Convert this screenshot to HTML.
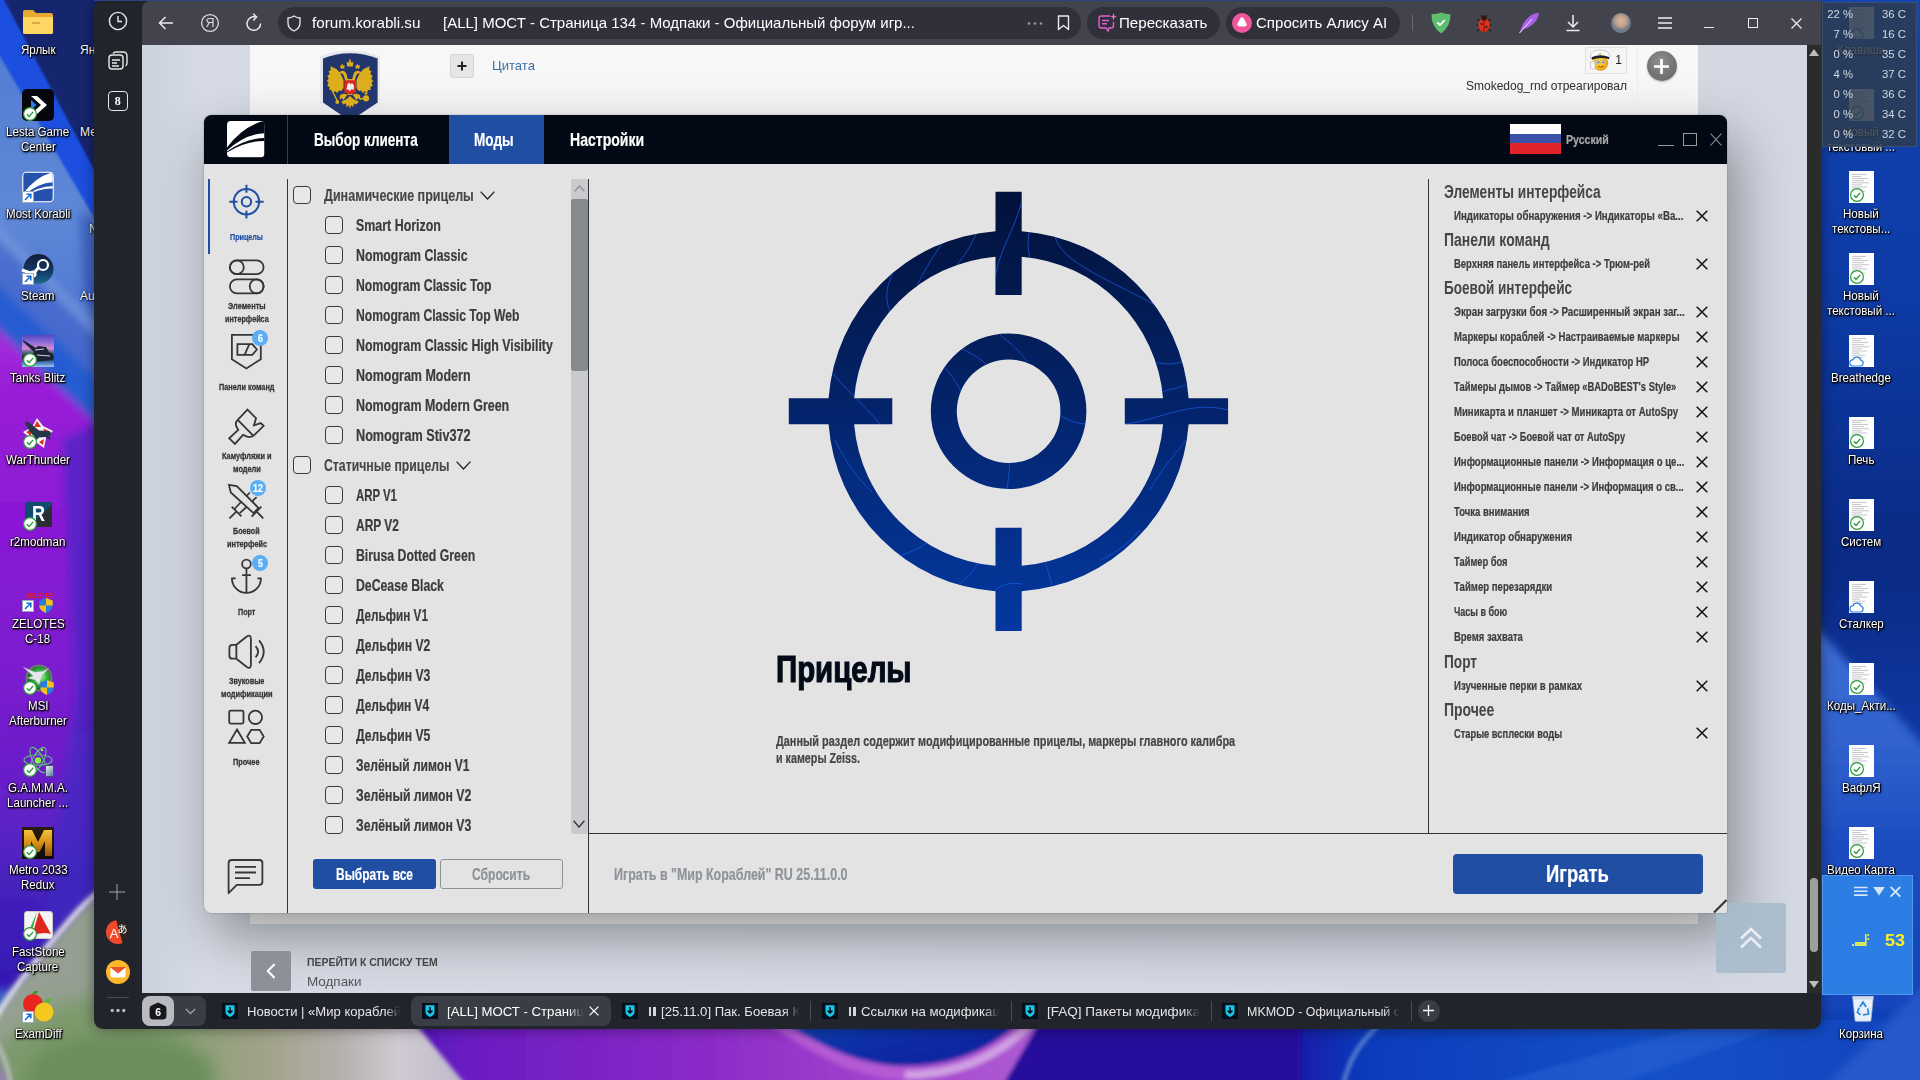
<!DOCTYPE html>
<html lang="ru"><head><meta charset="utf-8"><title>MOST</title>
<style>
html,body{margin:0;padding:0;width:1920px;height:1080px;overflow:hidden;background:#1a3db8;font-family:"Liberation Sans",sans-serif}
.t{position:absolute;white-space:nowrap;line-height:24px;display:block}
.b{position:absolute;box-sizing:border-box}
svg{position:absolute;overflow:visible}
.dl{position:absolute;width:120px;text-align:center;color:#fff;font-size:12.5px;line-height:15px;text-shadow:0 0 2px #000,1px 1px 2px #000,0 1px 3px rgba(0,0,0,.9);white-space:nowrap}
.ab{position:absolute}
</style>
</head><body>
<!-- desktop -->
<svg width="1920" height="1080" viewBox="0 0 1920 1080" style="left:0;top:0">
<defs>
<filter id="bl" x="-20%" y="-20%" width="140%" height="140%"><feGaussianBlur stdDeviation="9"/></filter>
<filter id="bl2" x="-20%" y="-20%" width="140%" height="140%"><feGaussianBlur stdDeviation="4"/></filter>
<filter id="bl4" x="-20%" y="-20%" width="140%" height="140%"><feGaussianBlur stdDeviation="1.2"/></filter>
<filter id="bl3" x="-20%" y="-20%" width="140%" height="140%"><feGaussianBlur stdDeviation="2"/></filter>
<linearGradient id="wtop" x1="0" y1="0" x2="0" y2="1"><stop offset="0" stop-color="#4f7ad2"/><stop offset=".2" stop-color="#5f88d6"/><stop offset=".32" stop-color="#4c72d0"/><stop offset="1" stop-color="#3a60cc"/></linearGradient>
<linearGradient id="wpur" x1="0" y1="0" x2="0" y2="1"><stop offset="0" stop-color="#a634dc"/><stop offset=".1" stop-color="#9a20d8"/><stop offset=".3" stop-color="#8c19d6"/><stop offset=".55" stop-color="#7a1ccf"/><stop offset=".72" stop-color="#6420c8"/><stop offset=".86" stop-color="#4420bc"/><stop offset="1" stop-color="#3418b4"/></linearGradient>
<linearGradient id="wr" x1="0" y1="0" x2="0" y2="1"><stop offset="0" stop-color="#1244b4"/><stop offset=".3" stop-color="#0d3aa4"/><stop offset=".55" stop-color="#0a2a84"/><stop offset=".75" stop-color="#113aa8"/><stop offset="1" stop-color="#1040b6"/></linearGradient>
<linearGradient id="wbot" gradientUnits="userSpaceOnUse" x1="0" y1="0" x2="1920" y2="0"><stop offset="0.0000" stop-color="#b8a8cc"/><stop offset="0.0130" stop-color="#74925f"/><stop offset="0.0781" stop-color="#82a070"/><stop offset="0.1354" stop-color="#9fa287"/><stop offset="0.1771" stop-color="#b4b0ac"/><stop offset="0.2083" stop-color="#cfcbd2"/><stop offset="0.5417" stop-color="#2a109c"/><stop offset="0.6667" stop-color="#1a14a4"/><stop offset="0.7135" stop-color="#0c3cbc"/><stop offset="0.8594" stop-color="#1450c8"/><stop offset="1.0000" stop-color="#1244be"/></linearGradient>
<linearGradient id="wbp" gradientUnits="userSpaceOnUse" x1="400" y1="0" x2="1060" y2="0"><stop offset="0" stop-color="#4a16b6"/><stop offset=".1" stop-color="#6a1cc2"/><stop offset=".45" stop-color="#8a2ac8"/><stop offset=".7" stop-color="#a040cc"/><stop offset="1" stop-color="#b060d4"/></linearGradient>
<linearGradient id="wbowl" x1="0" y1="0" x2="1" y2="1"><stop offset="0" stop-color="#1a58c0"/><stop offset=".5" stop-color="#0c30a8"/><stop offset="1" stop-color="#0a1c9a"/></linearGradient>
<linearGradient id="wrb" gradientUnits="userSpaceOnUse" x1="0" y1="620" x2="0" y2="1000"><stop offset="0" stop-color="#3f70d6"/><stop offset=".35" stop-color="#2f60cc"/><stop offset=".6" stop-color="#1c4cc0"/><stop offset="1" stop-color="#1644bc"/></linearGradient>
</defs>
<rect x="0" y="0" width="300" height="1080" fill="url(#wtop)"/>
<g filter="url(#bl4)"><polygon points="-20,-60 120,200 120,262 -20,22" fill="#1d4fe0"/><polygon points="-20,-45 120,219 120,-45" fill="#15286e"/></g><g filter="url(#bl2)"><polygon points="-10,218 110,338 110,350 -10,228" fill="#86a8e6" opacity=".55"/><polygon points="-10,232 110,352 110,470 -10,330" fill="#3f63cc" opacity=".6"/><polygon points="78,210 110,230 110,330 84,300" fill="#2a4cb8" opacity=".5"/><polygon points="-20,268 120,402 120,446 -20,312" fill="#1f5cd2" opacity=".85"/><polygon points="-20,312 120,446 120,990 -20,990" fill="url(#wpur)"/><polygon points="62,440 120,410 120,960 40,960 75,700" fill="#3a2abf" opacity=".6"/></g>
<rect x="0" y="1010" width="1920" height="70" fill="url(#wbot)"/>
<g filter="url(#bl2)"><path d="M-30,1050 C0,1005 30,966 70,920 C85,903 100,891 110,885 L110,1110 L-30,1110 Z" fill="#95a092"/></g><g filter="url(#bl)"><path d="M-30,1075 C30,1010 70,990 110,1000 L110,1110 L-30,1110 Z" fill="#7d9a6c"/><ellipse cx="120" cy="1075" rx="95" ry="42" fill="#6c8e5c"/></g><g filter="url(#bl2)"><path d="M-30,1040 C-5,1050 5,1070 10,1100 L-30,1100Z" fill="#9a78c0"/></g>
<g filter="url(#bl3)"><path d="M-12,1030 C5,1000 30,966 70,920 C82,906 92,897 100,891" stroke="#eeeaf4" stroke-width="4.500" fill="none" opacity=".95"/><path d="M-10,1035 C2,1048 8,1065 12,1090" stroke="#e0d8ec" stroke-width="3.500" fill="none" opacity=".7"/></g>
<g filter="url(#bl3)"><polygon points="396,1000 1060,1000 1060,1090 470,1090" fill="url(#wbp)"/><polygon points="1052,1000 1300,1000 1300,1090 1000,1090" fill="#26109c"/><path d="M745,1000 C808,1044 853,1073 905,1073 C967,1073 1014,1046 1046,1000" stroke="#b45ad4" stroke-width="13" fill="none"/><path d="M905,1075 C967,1075 1016,1048 1048,1002" stroke="#d4a8e6" stroke-width="8" fill="none" opacity=".9"/><path d="M750,1000 C810,1042 855,1066 905,1066 C965,1066 1010,1040 1038,1000 Z" fill="url(#wbowl)"/><path d="M1385,1020 C1360,1040 1348,1060 1342,1090" stroke="#a8d8f0" stroke-width="2.500" fill="none" opacity=".8"/><polygon points="1470,1090 1720,1020 1800,1020 1600,1090" fill="#2a62d4" opacity=".55"/></g>
<rect x="1800" y="0" width="120" height="1020" fill="url(#wr)"/>
<g filter="url(#bl2)"><polygon points="1800,610 1930,752 1930,1010 1800,1010" fill="url(#wrb)"/><polygon points="1820,1090 1930,980 1930,1090" fill="#2a5ccc" opacity=".8"/></g>
</svg>
<svg style="left:23px;top:10px" width="30" height="24" viewBox="0 0 30 24"><path d="M0 2 Q0 0 2 0 H10 L13 3 H28 Q30 3 30 5 V22 Q30 24 28 24 H2 Q0 24 0 22 Z" fill="#e8a92c"/><path d="M0 7 H30 V22 Q30 24 28 24 H2 Q0 24 0 22 Z" fill="#ffd564"/><rect x="9" y="12" width="8" height="2" fill="#d9a84a"/></svg>
<span class="t" style="left:20.72px;top:38.22px;font-size:12px;color:#fff;font-weight:normal;transform:scaleX(0.9631);transform-origin:0 50%;text-shadow:0 0 2px #000,1px 1px 2px #000,1px 1px 1px rgba(0,0,0,.9),0 1px 3px rgba(0,0,0,.85);">Ярлык</span>
<div class="b" style="left:22px;top:89px;width:32px;height:32px;background:#05070c;border-radius:5px"></div>
<svg style="left:22px;top:89px" width="32" height="32" viewBox="0 0 32 32"><path d="M9 7 H15 L25 16 L15 25 H9 L19 16 Z" fill="#fff"/><path d="M9 11 L14.5 16 L9 21 Z" fill="#2a7de8"/></svg>
<svg style="left:22.5px;top:106.5px" width="14" height="14" viewBox="0 0 14 14"><circle cx="7" cy="7" r="6.400" fill="#fff" stroke="#2c9a3c" stroke-width="1.200"/><path d="M3.900 7.200 L6.100 9.400 L10.200 4.900" fill="none" stroke="#2c9a3c" stroke-width="1.400"/></svg>
<span class="t" style="left:6.46px;top:120.22px;font-size:12px;color:#fff;font-weight:normal;transform:scaleX(0.9654);transform-origin:0 50%;text-shadow:0 0 2px #000,1px 1px 2px #000,1px 1px 1px rgba(0,0,0,.9),0 1px 3px rgba(0,0,0,.85);">Lesta Game</span>
<span class="t" style="left:20.62px;top:135.22px;font-size:12px;color:#fff;font-weight:normal;transform:scaleX(0.9655);transform-origin:0 50%;text-shadow:0 0 2px #000,1px 1px 2px #000,1px 1px 1px rgba(0,0,0,.9),0 1px 3px rgba(0,0,0,.85);">Center</span>
<svg style="left:22px;top:171px" width="32" height="32" viewBox="-1.500 -1.500 40.500 39.400"><defs><clipPath id="mkc"><rect width="37.500" height="36.400" rx="4.500"/></clipPath></defs><rect x="-1.200" y="-1.200" width="39.900" height="38.800" rx="5.500" fill="#fff"/><g clip-path="url(#mkc)"><rect width="37.500" height="36.400" fill="#2452ac"/><path d="M0 26.500 Q15.400 6 36 0 L37.500 0 L37.500 12.200 Q18.750 13 0 29.500 Z" fill="#fff"/><path d="M0 30.500 Q18.750 17.400 37.500 17 L37.500 20 Q18.750 19.600 0 31.500 Z" fill="#fff"/></g></svg>
<svg style="left:22px;top:191px" width="12" height="12" viewBox="0 0 12 12"><rect x=".5" y=".5" width="11" height="11" fill="#fff" stroke="#9ab"/><path d="M3 9 L8.5 3.5 M4.5 3.2 H8.8 V7.5" fill="none" stroke="#1a6fd6" stroke-width="1.6"/></svg>
<span class="t" style="left:5.82px;top:202.22px;font-size:12px;color:#fff;font-weight:normal;transform:scaleX(0.9646);transform-origin:0 50%;text-shadow:0 0 2px #000,1px 1px 2px #000,1px 1px 1px rgba(0,0,0,.9),0 1px 3px rgba(0,0,0,.85);">Most Korabli</span>
<svg style="left:22px;top:253px" width="32" height="32" viewBox="0 0 32 32"><defs><linearGradient id="stg" x1="0" y1="0" x2="0" y2="1"><stop offset="0" stop-color="#111d3e"/><stop offset=".6" stop-color="#153a66"/><stop offset="1" stop-color="#1a6a8e"/></linearGradient></defs><circle cx="16.500" cy="16" r="15" fill="url(#stg)"/><circle cx="21" cy="12" r="5" fill="none" stroke="#fff" stroke-width="2.2"/><circle cx="11" cy="21" r="3.6" fill="#fff"/><path d="M0 17 L11 21 L17 14" stroke="#fff" stroke-width="3" fill="none"/></svg>
<svg style="left:22px;top:273px" width="12" height="12" viewBox="0 0 12 12"><rect x=".5" y=".5" width="11" height="11" fill="#fff" stroke="#9ab"/><path d="M3 9 L8.5 3.5 M4.5 3.2 H8.8 V7.5" fill="none" stroke="#1a6fd6" stroke-width="1.6"/></svg>
<span class="t" style="left:21.27px;top:284.22px;font-size:12px;color:#fff;font-weight:normal;transform:scaleX(0.9651);transform-origin:0 50%;text-shadow:0 0 2px #000,1px 1px 2px #000,1px 1px 1px rgba(0,0,0,.9),0 1px 3px rgba(0,0,0,.85);">Steam</span>
<div class="b" style="left:22px;top:335px;width:32px;height:32px;background:linear-gradient(180deg,#5646be 0,#8a6cd8 22%,#d98aca 42%,#6a6a98 52%,#1c2438 70%,#4a78b8 86%,#9cc6ee 100%)"></div>
<svg style="left:22px;top:335px" width="32" height="32" viewBox="0 0 32 32"><path d="M1 5 L14 13 L16 11 L24 12 L27 17 L31 19 L31 25 L12 27 L9 22 L12 17 L1 6.500 Z" fill="#1a2234"/><path d="M13 15 L22 14 M15 20 L28 21" stroke="#c9d6e8" stroke-width="1" fill="none"/></svg>
<svg style="left:22.5px;top:352.5px" width="14" height="14" viewBox="0 0 14 14"><circle cx="7" cy="7" r="6.400" fill="#fff" stroke="#2c9a3c" stroke-width="1.200"/><path d="M3.900 7.200 L6.100 9.400 L10.200 4.900" fill="none" stroke="#2c9a3c" stroke-width="1.400"/></svg>
<span class="t" style="left:10.33px;top:366.22px;font-size:12px;color:#fff;font-weight:normal;transform:scaleX(0.9649);transform-origin:0 50%;text-shadow:0 0 2px #000,1px 1px 2px #000,1px 1px 1px rgba(0,0,0,.9),0 1px 3px rgba(0,0,0,.85);">Tanks Blitz</span>
<svg style="left:22px;top:417px" width="32" height="32" viewBox="0 0 32 32"><path d="M15 1 L21 9 L31 14 L24 21 L22 31 L15 26 L6 30 L8 21 L1 15 L10 10 Z" fill="#f4f4f4"/><path d="M15 4 L19 10 L12 10 Z M21.500 11.500 L28 14.500 L22.500 19 Z M9.500 12 L4 15 L9 19 Z M10 22 L8.500 27.500 L14.500 24 Z M17 25 L21 28 L22 22 Z" fill="#d8341e"/><path d="M3 5 Q6 4 9 7 L17 13.500 L27 14 Q30 15.500 28.500 18 L27 19 L29 22.500 L26 22 L23.500 20 L17 20.500 L13.500 24 L12.500 19.500 Q6 14 3 5 Z" fill="#253646"/></svg>
<svg style="left:22.5px;top:434.5px" width="14" height="14" viewBox="0 0 14 14"><circle cx="7" cy="7" r="6.400" fill="#fff" stroke="#2c9a3c" stroke-width="1.200"/><path d="M3.900 7.200 L6.100 9.400 L10.200 4.900" fill="none" stroke="#2c9a3c" stroke-width="1.400"/></svg>
<span class="t" style="left:6.04px;top:448.22px;font-size:12px;color:#fff;font-weight:normal;transform:scaleX(0.9651);transform-origin:0 50%;text-shadow:0 0 2px #000,1px 1px 2px #000,1px 1px 1px rgba(0,0,0,.9),0 1px 3px rgba(0,0,0,.85);">WarThunder</span>
<div class="b" style="left:25px;top:502px;width:26.5px;height:25px;background:linear-gradient(135deg,#0f4c70 0,#0f4c70 56%,#2a2e35 57%,#2a2e35 100%)"></div>
<span class="t" style="left:32.00px;top:502.40px;font-size:22px;color:#fff;font-weight:bold;transform:scaleX(0.8207);transform-origin:0 50%;">R</span>
<svg style="left:22.5px;top:516.5px" width="14" height="14" viewBox="0 0 14 14"><circle cx="7" cy="7" r="6.400" fill="#fff" stroke="#2c9a3c" stroke-width="1.200"/><path d="M3.900 7.200 L6.100 9.400 L10.200 4.900" fill="none" stroke="#2c9a3c" stroke-width="1.400"/></svg>
<span class="t" style="left:10.32px;top:530.22px;font-size:12px;color:#fff;font-weight:normal;transform:scaleX(0.9650);transform-origin:0 50%;text-shadow:0 0 2px #000,1px 1px 2px #000,1px 1px 1px rgba(0,0,0,.9),0 1px 3px rgba(0,0,0,.85);">r2modman</span>
<span class="t" style="left:25.50px;top:583.63px;font-size:7px;color:#e0202a;font-weight:bold;transform:scaleX(0.8367);transform-origin:0 50%;font-style:italic;">ZELOTES</span>
<svg style="left:22px;top:600px" width="12" height="12" viewBox="0 0 12 12"><rect x=".5" y=".5" width="11" height="11" fill="#fff" stroke="#9ab"/><path d="M3 9 L8.5 3.5 M4.5 3.2 H8.8 V7.5" fill="none" stroke="#1a6fd6" stroke-width="1.6"/></svg>
<svg style="left:39px;top:598px" width="14" height="15" viewBox="0 0 16 18"><path d="M8 0 L16 3 V9 Q16 15 8 18 Q0 15 0 9 V3 Z" fill="#2a7de0"/><path d="M8 0 L16 3 V9 H8 Z" fill="#f2c21a"/><path d="M8 9 V18 Q0 15 0 9 Z" fill="#f2c21a"/></svg>
<span class="t" style="left:11.62px;top:612.22px;font-size:12px;color:#fff;font-weight:normal;transform:scaleX(0.9654);transform-origin:0 50%;text-shadow:0 0 2px #000,1px 1px 2px #000,1px 1px 1px rgba(0,0,0,.9),0 1px 3px rgba(0,0,0,.85);">ZELOTES</span>
<span class="t" style="left:25.45px;top:627.22px;font-size:12px;color:#fff;font-weight:normal;transform:scaleX(0.9639);transform-origin:0 50%;text-shadow:0 0 2px #000,1px 1px 2px #000,1px 1px 1px rgba(0,0,0,.9),0 1px 3px rgba(0,0,0,.85);">C-18</span>
<svg style="left:22px;top:663px" width="32" height="32" viewBox="0 0 32 32"><defs><radialGradient id="msig" cx=".55" cy=".45" r=".6"><stop offset="0" stop-color="#b8ffb4"/><stop offset=".45" stop-color="#36c040"/><stop offset="1" stop-color="#16521c"/></radialGradient></defs><circle cx="17" cy="15" r="13.500" fill="#6c7476"/><circle cx="17" cy="15" r="11.500" fill="url(#msig)"/><path d="M1 4 L13 9 L21 8 L27 5 L20 13 L17 22 L13 17 L5 15 L11 13 Z" fill="#e4e8ea" stroke="#8a9094" stroke-width=".5"/></svg>
<svg style="left:40px;top:680px" width="14" height="15" viewBox="0 0 16 18"><path d="M8 0 L16 3 V9 Q16 15 8 18 Q0 15 0 9 V3 Z" fill="#2a7de0"/><path d="M8 0 L16 3 V9 H8 Z" fill="#f2c21a"/><path d="M8 9 V18 Q0 15 0 9 Z" fill="#f2c21a"/></svg>
<svg style="left:22.5px;top:680.5px" width="14" height="14" viewBox="0 0 14 14"><circle cx="7" cy="7" r="6.400" fill="#fff" stroke="#2c9a3c" stroke-width="1.200"/><path d="M3.900 7.200 L6.100 9.400 L10.200 4.900" fill="none" stroke="#2c9a3c" stroke-width="1.400"/></svg>
<span class="t" style="left:27.71px;top:694.22px;font-size:12px;color:#fff;font-weight:normal;transform:scaleX(0.9639);transform-origin:0 50%;text-shadow:0 0 2px #000,1px 1px 2px #000,1px 1px 1px rgba(0,0,0,.9),0 1px 3px rgba(0,0,0,.85);">MSI</span>
<span class="t" style="left:9.03px;top:709.22px;font-size:12px;color:#fff;font-weight:normal;transform:scaleX(0.9645);transform-origin:0 50%;text-shadow:0 0 2px #000,1px 1px 2px #000,1px 1px 1px rgba(0,0,0,.9),0 1px 3px rgba(0,0,0,.85);">Afterburner</span>
<svg style="left:22px;top:745px" width="32" height="32" viewBox="0 0 32 32"><g fill="none" stroke="#62c47c" stroke-width="1.100"><ellipse cx="16" cy="15" rx="14" ry="5.200"/><ellipse cx="16" cy="15" rx="14" ry="5.200" transform="rotate(62 16 15)"/><ellipse cx="16" cy="15" rx="14" ry="5.200" transform="rotate(118 16 15)"/></g><circle cx="16" cy="15.500" r="3.200" fill="#86f04a"/><circle cx="20" cy="5" r="1.300" fill="#86f04a"/></svg>
<svg style="left:22.5px;top:762.5px" width="14" height="14" viewBox="0 0 14 14"><circle cx="7" cy="7" r="6.400" fill="#fff" stroke="#2c9a3c" stroke-width="1.200"/><path d="M3.900 7.200 L6.100 9.400 L10.200 4.900" fill="none" stroke="#2c9a3c" stroke-width="1.400"/></svg>
<div class="b" style="left:44.5px;top:765px;width:9.5px;height:11.5px;background:linear-gradient(135deg,#e8eef2 0,#9ab0c0 60%,#4a7aa8 100%);border:.8px solid #456"></div>
<span class="t" style="left:8.08px;top:776.22px;font-size:12px;color:#fff;font-weight:normal;transform:scaleX(0.9654);transform-origin:0 50%;text-shadow:0 0 2px #000,1px 1px 2px #000,1px 1px 1px rgba(0,0,0,.9),0 1px 3px rgba(0,0,0,.85);">G.A.M.M.A.</span>
<span class="t" style="left:7.42px;top:791.22px;font-size:12px;color:#fff;font-weight:normal;transform:scaleX(0.9652);transform-origin:0 50%;text-shadow:0 0 2px #000,1px 1px 2px #000,1px 1px 1px rgba(0,0,0,.9),0 1px 3px rgba(0,0,0,.85);">Launcher ...</span>
<div class="b" style="left:22px;top:827px;width:32px;height:32px;background:linear-gradient(180deg,#2a1c0a 0,#120c06 100%)"></div>
<svg style="left:22px;top:827px" width="32" height="32" viewBox="0 0 32 32"><defs><linearGradient id="mtg" x1="0" y1="0" x2="0" y2="1"><stop offset="0" stop-color="#f4c23a"/><stop offset=".5" stop-color="#d89018"/><stop offset="1" stop-color="#8a5610"/></linearGradient></defs><path d="M2 3 H10 L16 15 L22 3 H30 V29 H23 V14 L17.500 25 H14.500 L9 14 V29 H2 Z" fill="url(#mtg)"/></svg>
<svg style="left:22.5px;top:844.5px" width="14" height="14" viewBox="0 0 14 14"><circle cx="7" cy="7" r="6.400" fill="#fff" stroke="#2c9a3c" stroke-width="1.200"/><path d="M3.900 7.200 L6.100 9.400 L10.200 4.900" fill="none" stroke="#2c9a3c" stroke-width="1.400"/></svg>
<span class="t" style="left:8.71px;top:858.22px;font-size:12px;color:#fff;font-weight:normal;transform:scaleX(0.9648);transform-origin:0 50%;text-shadow:0 0 2px #000,1px 1px 2px #000,1px 1px 1px rgba(0,0,0,.9),0 1px 3px rgba(0,0,0,.85);">Metro 2033</span>
<span class="t" style="left:21.26px;top:873.22px;font-size:12px;color:#fff;font-weight:normal;transform:scaleX(0.9652);transform-origin:0 50%;text-shadow:0 0 2px #000,1px 1px 2px #000,1px 1px 1px rgba(0,0,0,.9),0 1px 3px rgba(0,0,0,.85);">Redux</span>
<div class="b" style="left:24px;top:911px;width:29px;height:28px;background:#f4f4f4;border-radius:3px;border:1px solid #ccc"></div>
<svg style="left:22px;top:909px" width="32" height="32" viewBox="0 0 32 32"><path d="M17 3 L29 25 Q20 22 10 27 Z" fill="#e0261c"/><path d="M15 3 L6 24 L9 26 Z" fill="#3aa83a"/></svg>
<svg style="left:22.5px;top:926.5px" width="14" height="14" viewBox="0 0 14 14"><circle cx="7" cy="7" r="6.400" fill="#fff" stroke="#2c9a3c" stroke-width="1.200"/><path d="M3.900 7.200 L6.100 9.400 L10.200 4.900" fill="none" stroke="#2c9a3c" stroke-width="1.400"/></svg>
<span class="t" style="left:11.61px;top:940.22px;font-size:12px;color:#fff;font-weight:normal;transform:scaleX(0.9646);transform-origin:0 50%;text-shadow:0 0 2px #000,1px 1px 2px #000,1px 1px 1px rgba(0,0,0,.9),0 1px 3px rgba(0,0,0,.85);">FastStone</span>
<span class="t" style="left:17.40px;top:955.22px;font-size:12px;color:#fff;font-weight:normal;transform:scaleX(0.9644);transform-origin:0 50%;text-shadow:0 0 2px #000,1px 1px 2px #000,1px 1px 1px rgba(0,0,0,.9),0 1px 3px rgba(0,0,0,.85);">Capture</span>
<svg style="left:22px;top:990px" width="33" height="33" viewBox="0 0 33 33"><circle cx="11" cy="14" r="10" fill="#e8261e"/><circle cx="22" cy="22" r="9.5" fill="#f4c81e"/><path d="M10 4 Q12 0 16 1 Q15 5 10 4" fill="#3a9a2a"/><path d="M22 12 Q25 7 30 9 Q28 13 22 12" fill="#5ab82a"/></svg>
<svg style="left:22px;top:1011px" width="12" height="12" viewBox="0 0 12 12"><rect x=".5" y=".5" width="11" height="11" fill="#fff" stroke="#9ab"/><path d="M3 9 L8.5 3.5 M4.5 3.2 H8.8 V7.5" fill="none" stroke="#1a6fd6" stroke-width="1.6"/></svg>
<span class="t" style="left:14.62px;top:1022.22px;font-size:12px;color:#fff;font-weight:normal;transform:scaleX(0.9646);transform-origin:0 50%;text-shadow:0 0 2px #000,1px 1px 2px #000,1px 1px 1px rgba(0,0,0,.9),0 1px 3px rgba(0,0,0,.85);">ExamDiff</span>
<span class="t" style="left:80.00px;top:38.22px;font-size:12px;color:#fff;font-weight:normal;text-shadow:0 0 2px #000,1px 1px 2px #000;">Ян</span>
<span class="t" style="left:80.00px;top:120.22px;font-size:12px;color:#fff;font-weight:normal;text-shadow:0 0 2px #000,1px 1px 2px #000;">Ме</span>
<span class="t" style="left:89.00px;top:217.22px;font-size:12px;color:#fff;font-weight:normal;text-shadow:0 0 2px #000,1px 1px 2px #000;">N</span>
<span class="t" style="left:80.00px;top:284.22px;font-size:12px;color:#fff;font-weight:normal;text-shadow:0 0 2px #000,1px 1px 2px #000;">Au</span>
<svg style="left:1849px;top:7px" width="25" height="32" viewBox="0 0 25 32"><rect width="25" height="32" fill="#fdfdfd"/><rect x="3" y="3" width="14" height=".8" fill="#b9b9c2"/><rect x="3" y="5.1" width="9" height=".8" fill="#b9b9c2"/><rect x="3" y="7.2" width="16" height=".8" fill="#b9b9c2"/><rect x="3" y="9.3" width="12" height=".8" fill="#b9b9c2"/><rect x="3" y="11.4" width="17" height=".8" fill="#b9b9c2"/><rect x="3" y="13.5" width="10" height=".8" fill="#b9b9c2"/><rect x="3" y="15.6" width="15" height=".8" fill="#b9b9c2"/><rect x="3" y="17.7" width="8" height=".8" fill="#b9b9c2"/><rect x="3" y="19.8" width="13" height=".8" fill="#b9b9c2"/><rect x="3" y="21.9" width="11" height=".8" fill="#b9b9c2"/><rect x="3" y="24" width="6" height=".8" fill="#b9b9c2"/></svg>
<svg style="left:1848.5px;top:28px" width="15" height="11" viewBox="0 0 15 11"><path d="M4 10 H11.5 A3 3 0 0 0 11.8 4.1 A4 4 0 0 0 4.2 3.6 A3.2 3.2 0 0 0 4 10 Z" fill="#fff" stroke="#2a7fe0" stroke-width="1.2"/></svg>
<span class="t" style="left:1836.84px;top:38.22px;font-size:12px;color:#fff;font-weight:normal;transform:scaleX(0.9645);transform-origin:0 50%;text-shadow:0 0 2px #000,1px 1px 2px #000,1px 1px 1px rgba(0,0,0,.9),0 1px 3px rgba(0,0,0,.85);">Клавиши</span>
<svg style="left:1849px;top:89px" width="25" height="32" viewBox="0 0 25 32"><rect width="25" height="32" fill="#fdfdfd"/><rect x="3" y="3" width="14" height=".8" fill="#b9b9c2"/><rect x="3" y="5.1" width="9" height=".8" fill="#b9b9c2"/><rect x="3" y="7.2" width="16" height=".8" fill="#b9b9c2"/><rect x="3" y="9.3" width="12" height=".8" fill="#b9b9c2"/><rect x="3" y="11.4" width="17" height=".8" fill="#b9b9c2"/><rect x="3" y="13.5" width="10" height=".8" fill="#b9b9c2"/><rect x="3" y="15.6" width="15" height=".8" fill="#b9b9c2"/><rect x="3" y="17.7" width="8" height=".8" fill="#b9b9c2"/><rect x="3" y="19.8" width="13" height=".8" fill="#b9b9c2"/><rect x="3" y="21.9" width="11" height=".8" fill="#b9b9c2"/><rect x="3" y="24" width="6" height=".8" fill="#b9b9c2"/></svg>
<svg style="left:1849.5px;top:106px" width="14" height="14" viewBox="0 0 14 14"><circle cx="7" cy="7" r="6.400" fill="#fff" stroke="#2c9a3c" stroke-width="1.200"/><path d="M3.900 7.200 L6.100 9.400 L10.200 4.900" fill="none" stroke="#2c9a3c" stroke-width="1.400"/></svg>
<span class="t" style="left:1843.13px;top:120.22px;font-size:12px;color:#fff;font-weight:normal;transform:scaleX(0.9656);transform-origin:0 50%;text-shadow:0 0 2px #000,1px 1px 2px #000,1px 1px 1px rgba(0,0,0,.9),0 1px 3px rgba(0,0,0,.85);">Новый</span>
<span class="t" style="left:1826.99px;top:135.22px;font-size:12px;color:#fff;font-weight:normal;transform:scaleX(0.9649);transform-origin:0 50%;text-shadow:0 0 2px #000,1px 1px 2px #000,1px 1px 1px rgba(0,0,0,.9),0 1px 3px rgba(0,0,0,.85);">текстовый ...</span>
<svg style="left:1849px;top:171px" width="25" height="32" viewBox="0 0 25 32"><rect width="25" height="32" fill="#fdfdfd"/><rect x="3" y="3" width="14" height=".8" fill="#b9b9c2"/><rect x="3" y="5.1" width="9" height=".8" fill="#b9b9c2"/><rect x="3" y="7.2" width="16" height=".8" fill="#b9b9c2"/><rect x="3" y="9.3" width="12" height=".8" fill="#b9b9c2"/><rect x="3" y="11.4" width="17" height=".8" fill="#b9b9c2"/><rect x="3" y="13.5" width="10" height=".8" fill="#b9b9c2"/><rect x="3" y="15.6" width="15" height=".8" fill="#b9b9c2"/><rect x="3" y="17.7" width="8" height=".8" fill="#b9b9c2"/><rect x="3" y="19.8" width="13" height=".8" fill="#b9b9c2"/><rect x="3" y="21.9" width="11" height=".8" fill="#b9b9c2"/><rect x="3" y="24" width="6" height=".8" fill="#b9b9c2"/></svg>
<svg style="left:1849.5px;top:188px" width="14" height="14" viewBox="0 0 14 14"><circle cx="7" cy="7" r="6.400" fill="#fff" stroke="#2c9a3c" stroke-width="1.200"/><path d="M3.900 7.200 L6.100 9.400 L10.200 4.900" fill="none" stroke="#2c9a3c" stroke-width="1.400"/></svg>
<span class="t" style="left:1843.13px;top:202.22px;font-size:12px;color:#fff;font-weight:normal;transform:scaleX(0.9656);transform-origin:0 50%;text-shadow:0 0 2px #000,1px 1px 2px #000,1px 1px 1px rgba(0,0,0,.9),0 1px 3px rgba(0,0,0,.85);">Новый</span>
<span class="t" style="left:1831.83px;top:217.22px;font-size:12px;color:#fff;font-weight:normal;transform:scaleX(0.9646);transform-origin:0 50%;text-shadow:0 0 2px #000,1px 1px 2px #000,1px 1px 1px rgba(0,0,0,.9),0 1px 3px rgba(0,0,0,.85);">текстовы...</span>
<svg style="left:1849px;top:253px" width="25" height="32" viewBox="0 0 25 32"><rect width="25" height="32" fill="#fdfdfd"/><rect x="3" y="3" width="14" height=".8" fill="#b9b9c2"/><rect x="3" y="5.1" width="9" height=".8" fill="#b9b9c2"/><rect x="3" y="7.2" width="16" height=".8" fill="#b9b9c2"/><rect x="3" y="9.3" width="12" height=".8" fill="#b9b9c2"/><rect x="3" y="11.4" width="17" height=".8" fill="#b9b9c2"/><rect x="3" y="13.5" width="10" height=".8" fill="#b9b9c2"/><rect x="3" y="15.6" width="15" height=".8" fill="#b9b9c2"/><rect x="3" y="17.7" width="8" height=".8" fill="#b9b9c2"/><rect x="3" y="19.8" width="13" height=".8" fill="#b9b9c2"/><rect x="3" y="21.9" width="11" height=".8" fill="#b9b9c2"/><rect x="3" y="24" width="6" height=".8" fill="#b9b9c2"/></svg>
<svg style="left:1849.5px;top:270px" width="14" height="14" viewBox="0 0 14 14"><circle cx="7" cy="7" r="6.400" fill="#fff" stroke="#2c9a3c" stroke-width="1.200"/><path d="M3.900 7.200 L6.100 9.400 L10.200 4.900" fill="none" stroke="#2c9a3c" stroke-width="1.400"/></svg>
<span class="t" style="left:1843.13px;top:284.22px;font-size:12px;color:#fff;font-weight:normal;transform:scaleX(0.9656);transform-origin:0 50%;text-shadow:0 0 2px #000,1px 1px 2px #000,1px 1px 1px rgba(0,0,0,.9),0 1px 3px rgba(0,0,0,.85);">Новый</span>
<span class="t" style="left:1826.99px;top:299.22px;font-size:12px;color:#fff;font-weight:normal;transform:scaleX(0.9649);transform-origin:0 50%;text-shadow:0 0 2px #000,1px 1px 2px #000,1px 1px 1px rgba(0,0,0,.9),0 1px 3px rgba(0,0,0,.85);">текстовый ...</span>
<svg style="left:1849px;top:335px" width="25" height="32" viewBox="0 0 25 32"><rect width="25" height="32" fill="#fdfdfd"/><rect x="3" y="3" width="14" height=".8" fill="#b9b9c2"/><rect x="3" y="5.1" width="9" height=".8" fill="#b9b9c2"/><rect x="3" y="7.2" width="16" height=".8" fill="#b9b9c2"/><rect x="3" y="9.3" width="12" height=".8" fill="#b9b9c2"/><rect x="3" y="11.4" width="17" height=".8" fill="#b9b9c2"/><rect x="3" y="13.5" width="10" height=".8" fill="#b9b9c2"/><rect x="3" y="15.6" width="15" height=".8" fill="#b9b9c2"/><rect x="3" y="17.7" width="8" height=".8" fill="#b9b9c2"/><rect x="3" y="19.8" width="13" height=".8" fill="#b9b9c2"/><rect x="3" y="21.9" width="11" height=".8" fill="#b9b9c2"/><rect x="3" y="24" width="6" height=".8" fill="#b9b9c2"/></svg>
<svg style="left:1848.5px;top:356px" width="15" height="11" viewBox="0 0 15 11"><path d="M4 10 H11.5 A3 3 0 0 0 11.8 4.1 A4 4 0 0 0 4.2 3.6 A3.2 3.2 0 0 0 4 10 Z" fill="#fff" stroke="#2a7fe0" stroke-width="1.2"/></svg>
<span class="t" style="left:1831.06px;top:366.22px;font-size:12px;color:#fff;font-weight:normal;transform:scaleX(0.9652);transform-origin:0 50%;text-shadow:0 0 2px #000,1px 1px 2px #000,1px 1px 1px rgba(0,0,0,.9),0 1px 3px rgba(0,0,0,.85);">Breathedge</span>
<svg style="left:1849px;top:417px" width="25" height="32" viewBox="0 0 25 32"><rect width="25" height="32" fill="#fdfdfd"/><rect x="3" y="3" width="14" height=".8" fill="#b9b9c2"/><rect x="3" y="5.1" width="9" height=".8" fill="#b9b9c2"/><rect x="3" y="7.2" width="16" height=".8" fill="#b9b9c2"/><rect x="3" y="9.3" width="12" height=".8" fill="#b9b9c2"/><rect x="3" y="11.4" width="17" height=".8" fill="#b9b9c2"/><rect x="3" y="13.5" width="10" height=".8" fill="#b9b9c2"/><rect x="3" y="15.6" width="15" height=".8" fill="#b9b9c2"/><rect x="3" y="17.7" width="8" height=".8" fill="#b9b9c2"/><rect x="3" y="19.8" width="13" height=".8" fill="#b9b9c2"/><rect x="3" y="21.9" width="11" height=".8" fill="#b9b9c2"/><rect x="3" y="24" width="6" height=".8" fill="#b9b9c2"/></svg>
<svg style="left:1849.5px;top:434px" width="14" height="14" viewBox="0 0 14 14"><circle cx="7" cy="7" r="6.400" fill="#fff" stroke="#2c9a3c" stroke-width="1.200"/><path d="M3.900 7.200 L6.100 9.400 L10.200 4.900" fill="none" stroke="#2c9a3c" stroke-width="1.400"/></svg>
<span class="t" style="left:1847.78px;top:448.22px;font-size:12px;color:#fff;font-weight:normal;transform:scaleX(0.9645);transform-origin:0 50%;text-shadow:0 0 2px #000,1px 1px 2px #000,1px 1px 1px rgba(0,0,0,.9),0 1px 3px rgba(0,0,0,.85);">Печь</span>
<svg style="left:1849px;top:499px" width="25" height="32" viewBox="0 0 25 32"><rect width="25" height="32" fill="#fdfdfd"/><rect x="3" y="3" width="14" height=".8" fill="#b9b9c2"/><rect x="3" y="5.1" width="9" height=".8" fill="#b9b9c2"/><rect x="3" y="7.2" width="16" height=".8" fill="#b9b9c2"/><rect x="3" y="9.3" width="12" height=".8" fill="#b9b9c2"/><rect x="3" y="11.4" width="17" height=".8" fill="#b9b9c2"/><rect x="3" y="13.5" width="10" height=".8" fill="#b9b9c2"/><rect x="3" y="15.6" width="15" height=".8" fill="#b9b9c2"/><rect x="3" y="17.7" width="8" height=".8" fill="#b9b9c2"/><rect x="3" y="19.8" width="13" height=".8" fill="#b9b9c2"/><rect x="3" y="21.9" width="11" height=".8" fill="#b9b9c2"/><rect x="3" y="24" width="6" height=".8" fill="#b9b9c2"/></svg>
<svg style="left:1849.5px;top:516px" width="14" height="14" viewBox="0 0 14 14"><circle cx="7" cy="7" r="6.400" fill="#fff" stroke="#2c9a3c" stroke-width="1.200"/><path d="M3.900 7.200 L6.100 9.400 L10.200 4.900" fill="none" stroke="#2c9a3c" stroke-width="1.400"/></svg>
<span class="t" style="left:1840.90px;top:530.22px;font-size:12px;color:#fff;font-weight:normal;transform:scaleX(0.9653);transform-origin:0 50%;text-shadow:0 0 2px #000,1px 1px 2px #000,1px 1px 1px rgba(0,0,0,.9),0 1px 3px rgba(0,0,0,.85);">Систем</span>
<svg style="left:1849px;top:581px" width="25" height="32" viewBox="0 0 25 32"><rect width="25" height="32" fill="#fdfdfd"/><rect x="3" y="3" width="14" height=".8" fill="#b9b9c2"/><rect x="3" y="5.1" width="9" height=".8" fill="#b9b9c2"/><rect x="3" y="7.2" width="16" height=".8" fill="#b9b9c2"/><rect x="3" y="9.3" width="12" height=".8" fill="#b9b9c2"/><rect x="3" y="11.4" width="17" height=".8" fill="#b9b9c2"/><rect x="3" y="13.5" width="10" height=".8" fill="#b9b9c2"/><rect x="3" y="15.6" width="15" height=".8" fill="#b9b9c2"/><rect x="3" y="17.7" width="8" height=".8" fill="#b9b9c2"/><rect x="3" y="19.8" width="13" height=".8" fill="#b9b9c2"/><rect x="3" y="21.9" width="11" height=".8" fill="#b9b9c2"/><rect x="3" y="24" width="6" height=".8" fill="#b9b9c2"/></svg>
<svg style="left:1848.5px;top:602px" width="15" height="11" viewBox="0 0 15 11"><path d="M4 10 H11.5 A3 3 0 0 0 11.8 4.1 A4 4 0 0 0 4.2 3.6 A3.2 3.2 0 0 0 4 10 Z" fill="#fff" stroke="#2a7fe0" stroke-width="1.2"/></svg>
<span class="t" style="left:1838.59px;top:612.22px;font-size:12px;color:#fff;font-weight:normal;transform:scaleX(0.9649);transform-origin:0 50%;text-shadow:0 0 2px #000,1px 1px 2px #000,1px 1px 1px rgba(0,0,0,.9),0 1px 3px rgba(0,0,0,.85);">Сталкер</span>
<svg style="left:1849px;top:663px" width="25" height="32" viewBox="0 0 25 32"><rect width="25" height="32" fill="#fdfdfd"/><rect x="3" y="3" width="14" height=".8" fill="#b9b9c2"/><rect x="3" y="5.1" width="9" height=".8" fill="#b9b9c2"/><rect x="3" y="7.2" width="16" height=".8" fill="#b9b9c2"/><rect x="3" y="9.3" width="12" height=".8" fill="#b9b9c2"/><rect x="3" y="11.4" width="17" height=".8" fill="#b9b9c2"/><rect x="3" y="13.5" width="10" height=".8" fill="#b9b9c2"/><rect x="3" y="15.6" width="15" height=".8" fill="#b9b9c2"/><rect x="3" y="17.7" width="8" height=".8" fill="#b9b9c2"/><rect x="3" y="19.8" width="13" height=".8" fill="#b9b9c2"/><rect x="3" y="21.9" width="11" height=".8" fill="#b9b9c2"/><rect x="3" y="24" width="6" height=".8" fill="#b9b9c2"/></svg>
<svg style="left:1849.5px;top:680px" width="14" height="14" viewBox="0 0 14 14"><circle cx="7" cy="7" r="6.400" fill="#fff" stroke="#2c9a3c" stroke-width="1.200"/><path d="M3.900 7.200 L6.100 9.400 L10.200 4.900" fill="none" stroke="#2c9a3c" stroke-width="1.400"/></svg>
<span class="t" style="left:1826.60px;top:694.22px;font-size:12px;color:#fff;font-weight:normal;transform:scaleX(0.9652);transform-origin:0 50%;text-shadow:0 0 2px #000,1px 1px 2px #000,1px 1px 1px rgba(0,0,0,.9),0 1px 3px rgba(0,0,0,.85);">Коды_Акти...</span>
<svg style="left:1849px;top:745px" width="25" height="32" viewBox="0 0 25 32"><rect width="25" height="32" fill="#fdfdfd"/><rect x="3" y="3" width="14" height=".8" fill="#b9b9c2"/><rect x="3" y="5.1" width="9" height=".8" fill="#b9b9c2"/><rect x="3" y="7.2" width="16" height=".8" fill="#b9b9c2"/><rect x="3" y="9.3" width="12" height=".8" fill="#b9b9c2"/><rect x="3" y="11.4" width="17" height=".8" fill="#b9b9c2"/><rect x="3" y="13.5" width="10" height=".8" fill="#b9b9c2"/><rect x="3" y="15.6" width="15" height=".8" fill="#b9b9c2"/><rect x="3" y="17.7" width="8" height=".8" fill="#b9b9c2"/><rect x="3" y="19.8" width="13" height=".8" fill="#b9b9c2"/><rect x="3" y="21.9" width="11" height=".8" fill="#b9b9c2"/><rect x="3" y="24" width="6" height=".8" fill="#b9b9c2"/></svg>
<svg style="left:1849.5px;top:762px" width="14" height="14" viewBox="0 0 14 14"><circle cx="7" cy="7" r="6.400" fill="#fff" stroke="#2c9a3c" stroke-width="1.200"/><path d="M3.900 7.200 L6.100 9.400 L10.200 4.900" fill="none" stroke="#2c9a3c" stroke-width="1.400"/></svg>
<span class="t" style="left:1841.72px;top:776.22px;font-size:12px;color:#fff;font-weight:normal;transform:scaleX(0.9649);transform-origin:0 50%;text-shadow:0 0 2px #000,1px 1px 2px #000,1px 1px 1px rgba(0,0,0,.9),0 1px 3px rgba(0,0,0,.85);">ВафлЯ</span>
<svg style="left:1849px;top:827px" width="25" height="32" viewBox="0 0 25 32"><rect width="25" height="32" fill="#fdfdfd"/><rect x="3" y="3" width="14" height=".8" fill="#b9b9c2"/><rect x="3" y="5.1" width="9" height=".8" fill="#b9b9c2"/><rect x="3" y="7.2" width="16" height=".8" fill="#b9b9c2"/><rect x="3" y="9.3" width="12" height=".8" fill="#b9b9c2"/><rect x="3" y="11.4" width="17" height=".8" fill="#b9b9c2"/><rect x="3" y="13.5" width="10" height=".8" fill="#b9b9c2"/><rect x="3" y="15.6" width="15" height=".8" fill="#b9b9c2"/><rect x="3" y="17.7" width="8" height=".8" fill="#b9b9c2"/><rect x="3" y="19.8" width="13" height=".8" fill="#b9b9c2"/><rect x="3" y="21.9" width="11" height=".8" fill="#b9b9c2"/><rect x="3" y="24" width="6" height=".8" fill="#b9b9c2"/></svg>
<svg style="left:1849.5px;top:844px" width="14" height="14" viewBox="0 0 14 14"><circle cx="7" cy="7" r="6.400" fill="#fff" stroke="#2c9a3c" stroke-width="1.200"/><path d="M3.900 7.200 L6.100 9.400 L10.200 4.900" fill="none" stroke="#2c9a3c" stroke-width="1.400"/></svg>
<span class="t" style="left:1826.98px;top:858.22px;font-size:12px;color:#fff;font-weight:normal;transform:scaleX(0.9642);transform-origin:0 50%;text-shadow:0 0 2px #000,1px 1px 2px #000,1px 1px 1px rgba(0,0,0,.9),0 1px 3px rgba(0,0,0,.85);">Видео Карта</span>
<svg style="left:1850.500px;top:995px" width="24" height="27" viewBox="0 0 30 34"><path d="M2 2 H28 L25 32 Q25 33 24 33 H6 Q5 33 5 32 Z" fill="#e9f1f8" stroke="#a9bccd" stroke-width="1"/><path d="M2 2 H28 L27.5 6 H2.5 Z" fill="#cfdbe6"/><g fill="none" stroke="#2a86e0" stroke-width="2.2"><path d="M11 15 L15 9 L19 15"/><path d="M21 17 L22 24 L15 25"/><path d="M12 25 L8 22 L10 16"/></g></svg>
<span class="t" style="left:1838.95px;top:1022.22px;font-size:12px;color:#fff;font-weight:normal;transform:scaleX(0.9635);transform-origin:0 50%;text-shadow:0 0 2px #000,1px 1px 2px #000,1px 1px 1px rgba(0,0,0,.9),0 1px 3px rgba(0,0,0,.85);">Корзина</span>
<!-- browser -->
<div class="b" style="left:94px;top:0px;width:1727px;height:1029px;background:#22242c;border-radius:9px 0 9px 9px;box-shadow:0 0 14px rgba(0,0,0,.45)"></div>
<div class="b" style="left:94px;top:0px;width:1727px;height:1px;background:#27447f"></div>
<div class="b" style="left:142px;top:1px;width:1679px;height:43.5px;background:#43434d;border-radius:8px 0 0 0"></div>
<div class="b" style="left:278px;top:7px;width:803px;height:32px;background:#30303a;border-radius:16px"></div>
<svg style="left:108px;top:11px" width="20" height="20" viewBox="0 0 20 20"><circle cx="10" cy="10" r="8.6" fill="none" stroke="#e8e8ea" stroke-width="1.4"/><path d="M10 5 V10.5 H14" fill="none" stroke="#e8e8ea" stroke-width="1.4"/></svg>
<svg style="left:108px;top:51px" width="20" height="20" viewBox="0 0 20 20"><rect x="1" y="4" width="14" height="14" rx="3" fill="#22242c" stroke="#e8e8ea" stroke-width="1.4"/><path d="M5 2.5 Q6 1 8 1 H15 Q19 1 19 5 V12 Q19 14 17.5 15" fill="none" stroke="#e8e8ea" stroke-width="1.4"/><path d="M4 9 H12 M4 12 H9 M4 15 H11" stroke="#e8e8ea" stroke-width="1.3"/></svg>
<div class="b" style="left:108px;top:91px;width:20px;height:20px;border:1.5px solid #e8e8ea;border-radius:4px"></div>
<span class="t" style="left:114.66px;top:89.22px;font-size:12px;color:#fff;font-weight:bold;font-family:'Liberation Serif',serif;">8</span>
<svg style="left:109px;top:884px" width="16" height="16" viewBox="0 0 16 16"><path d="M8 0 V16 M0 8 H16" stroke="#a3a5ae" stroke-width="1"/></svg>
<svg style="left:106px;top:920px" width="24" height="24" viewBox="0 0 24 24"><defs><clipPath id="trc"><circle cx="12" cy="12" r="12"/></clipPath></defs><g clip-path="url(#trc)"><rect width="24" height="24" fill="#2a2422"/><path d="M-2 -2 H9.600 L17.300 26 H-2 Z" fill="#f2492a"/></g></svg>
<span class="t" style="left:109.66px;top:922.23px;font-size:13px;color:#fff;font-weight:normal;">A</span>
<span class="t" style="left:117.50px;top:917.68px;font-size:10px;color:#fff;font-weight:normal;font-family:'Liberation Sans','Noto Sans CJK JP',sans-serif;">あ</span>
<svg style="left:106px;top:960px" width="24" height="24" viewBox="0 0 24 24"><circle cx="12" cy="12" r="12" fill="#fdb72c"/><rect x="4.5" y="7" width="15" height="10.5" rx="1.5" fill="#fff"/><path d="M4.5 7.5 L12 13.5 L19.5 7.5 V7 H4.5Z" fill="#f0502a"/></svg>
<div class="b" style="left:107px;top:997px;width:22px;height:1px;background:#4a4c55"></div>
<svg style="left:110px;top:1008px" width="16" height="5" viewBox="0 0 16 5"><circle cx="2.2" cy="2.5" r="1.7" fill="#b7b9c0"/><circle cx="8" cy="2.5" r="1.7" fill="#b7b9c0"/><circle cx="13.8" cy="2.5" r="1.7" fill="#b7b9c0"/></svg>
<svg style="left:157px;top:14px" width="18" height="18" viewBox="0 0 18 18"><path d="M16 9 H2.5 M8.5 3 L2.5 9 L8.5 15" fill="none" stroke="#ececee" stroke-width="1.5"/></svg>
<svg style="left:200px;top:13px" width="20" height="20" viewBox="0 0 20 20"><circle cx="10" cy="10" r="8.4" fill="none" stroke="#d9d9de" stroke-width="1.3"/></svg>
<span class="t" style="left:205.49px;top:11.22px;font-size:12.5px;color:#d9d9de;font-weight:normal;">Я</span>
<svg style="left:245px;top:13px" width="18" height="19" viewBox="0 0 18 19"><path d="M15.6 10.5 A6.8 6.8 0 1 1 10.6 4" fill="none" stroke="#ececee" stroke-width="1.5"/><path d="M8.2 0.8 L11.6 4 L8.4 7.4" fill="none" stroke="#ececee" stroke-width="1.5"/></svg>
<svg style="left:287px;top:15px" width="14" height="17" viewBox="0 0 14 17"><path d="M7 1 Q10 3 13 3 V8 Q13 13.5 7 16 Q1 13.5 1 8 V3 Q4 3 7 1Z" fill="none" stroke="#ececee" stroke-width="1.3"/></svg>
<span class="t" style="left:312.00px;top:11.27px;font-size:15px;color:#fff;font-weight:normal;transform:scaleX(1.0166);transform-origin:0 50%;">forum.korabli.su</span>
<span class="t" style="left:443.30px;top:11.27px;font-size:15px;color:#fff;font-weight:normal;transform:scaleX(0.9997);transform-origin:0 50%;">[ALL] МОСТ - Страница 134 - Модпаки - Официальный форум игр...</span>
<svg style="left:1027px;top:21px" width="16" height="5" viewBox="0 0 16 5"><circle cx="2" cy="2.5" r="1.3" fill="#9a9aa4"/><circle cx="8" cy="2.5" r="1.3" fill="#9a9aa4"/><circle cx="14" cy="2.5" r="1.3" fill="#9a9aa4"/></svg>
<svg style="left:1057px;top:15px" width="13" height="16" viewBox="0 0 13 16"><path d="M1.5 1 H11.5 V14.5 L6.5 10.5 L1.5 14.5Z" fill="none" stroke="#ececee" stroke-width="1.4" stroke-linejoin="round"/></svg>
<div class="b" style="left:1087px;top:7px;width:133px;height:32px;background:#30303a;border-radius:16px"></div>
<svg style="left:1097px;top:13px" width="20" height="20" viewBox="0 0 20 20"><path d="M13 3 H4.5 Q2 3 2 5.5 V12.5 Q2 15 4.5 15 H9 L11 18 L12 15 H14 Q16.5 15 16.5 12.5 V9" fill="none" stroke="#e060d0" stroke-width="1.4"/><path d="M5 7.5 H12 M5 10.8 H10" stroke="#e060d0" stroke-width="1.4"/><path d="M16.5 0 L17.4 2.8 L20 3.7 L17.4 4.6 L16.5 7.4 L15.6 4.6 L13 3.7 L15.6 2.8Z" fill="#f070c0"/></svg>
<span class="t" style="left:1119.00px;top:11.27px;font-size:15px;color:#fff;font-weight:normal;transform:scaleX(1.0060);transform-origin:0 50%;">Пересказать</span>
<div class="b" style="left:1226px;top:7px;width:174px;height:32px;background:#30303a;border-radius:16px"></div>
<svg style="left:1232px;top:13px" width="20" height="20" viewBox="0 0 20 20"><circle cx="10" cy="10" r="10" fill="#f0569c"/><path d="M10 4.2 Q11 4.2 11.8 5.6 L14.6 11 Q15.6 13.6 10 13.6 Q4.4 13.6 5.4 11 L8.2 5.6 Q9 4.2 10 4.2Z" fill="#fff"/></svg>
<span class="t" style="left:1255.80px;top:11.27px;font-size:15px;color:#fff;font-weight:normal;transform:scaleX(1.0032);transform-origin:0 50%;">Спросить Алису AI</span>
<div class="b" style="left:1412px;top:15px;width:1px;height:16px;background:#6a6a74"></div>
<svg style="left:1431px;top:12px" width="20" height="22" viewBox="0 0 20 22"><path d="M10 .5 Q14 2 19.5 2.2 Q20 14 10 21.5 Q0 14 .5 2.2 Q6 2 10 .5Z" fill="#5fbd6e"/><path d="M6.3 10.5 L9 13 L13.8 8" fill="none" stroke="#fff" stroke-width="1.8"/></svg>
<svg style="left:1474px;top:12px" width="20" height="22" viewBox="0 0 20 22"><g stroke="#2a1a10" stroke-width="1.1"><path d="M3 7 L7 10 M2 13 H6 M3 19 L7 16 M17 7 L13 10 M18 13 H14 M17 19 L13 16 M7 3 L9 6 M13 3 L11 6"/></g><ellipse cx="10" cy="13" rx="5.6" ry="7" fill="#e0301e"/><circle cx="10" cy="6.2" r="2.6" fill="#2a1a10"/><path d="M10 7 V20" stroke="#7a140c" stroke-width="1"/><circle cx="7.6" cy="12" r="1.1" fill="#2a1a10"/><circle cx="12.4" cy="15" r="1.1" fill="#2a1a10"/></svg>
<svg style="left:1518px;top:12px" width="22" height="22" viewBox="0 0 22 22"><path d="M2 20 Q4 10 12 4 Q17 .5 21 1 Q20 8 14 13 Q9 17 4 17 Z" fill="#a95fe8"/><path d="M1.5 21 L14 7" stroke="#e8c8ff" stroke-width="1.1"/></svg>
<svg style="left:1565px;top:14px" width="16" height="18" viewBox="0 0 16 18"><path d="M8 1 V12.5 M3 8 L8 13 L13 8 M1.5 16.5 H14.5" fill="none" stroke="#ececee" stroke-width="1.5"/></svg>
<div class="b" style="left:1611px;top:13px;width:20px;height:20px;border-radius:10px;background:radial-gradient(circle at 50% 40%,#d8b8a0 0,#c0a088 35%,#6a7a8a 60%,#8a9aa8 100%)"></div>
<svg style="left:1658px;top:17px" width="14" height="12" viewBox="0 0 14 12"><path d="M0 1 H14 M0 6 H14 M0 11 H14" stroke="#ececee" stroke-width="1.4"/></svg>
<div class="b" style="left:1704px;top:27px;width:10px;height:1.3px;background:#ececee"></div>
<div class="b" style="left:1747.5px;top:17.5px;width:10.5px;height:10.5px;border:1.3px solid #ececee"></div>
<svg style="left:1791px;top:18px" width="11" height="11" viewBox="0 0 11 11"><path d="M.5 .5 L10.5 10.5 M10.5 .5 L.5 10.5" stroke="#ececee" stroke-width="1.3"/></svg>
<div class="b" style="left:142px;top:44.5px;width:1664.5px;height:948.5px;background:linear-gradient(90deg,#cbd1dd 0,#d6dbe5 62px,#d3d8e3 100%)"></div>
<div class="b" style="left:250px;top:44.5px;width:1448px;height:879.5px;background:#f7f7f7"></div>
<div class="b" style="left:142px;top:44.5px;width:1664.5px;height:948.5px;overflow:hidden"><div class="b" style="left:62px;top:70.5px;width:1523px;height:798px;border-radius:9px;box-shadow:9px 22px 55px rgba(0,0,0,.38)"></div></div>
<div class="b" style="left:1637px;top:44.5px;width:1px;height:58px;background:#ececec"></div>
<svg style="left:319px;top:49px" width="62" height="76" viewBox="0 0 62 76"><path d="M1 7.500 Q31 -4.500 61 7.500 L61 54.500 L31 75 L1 54.500 Z" fill="#e6e6ec"/><path d="M4 9.500 Q31 -1 58.600 9.500 L58.600 53.500 L31 72 L4 53.500 Z" fill="#22356c"/><g fill="#dcae1e"><path d="M24.500 31 L21.500 24.500 L17.500 20 L11.400 17.300 L11.800 21 L9.500 22.500 L10.800 25 L8.300 27 L9.800 29.500 L7.800 32 L9.600 34 L8.200 36.800 L10.600 38 L10.400 41 L13 41 L13.800 43.600 L16.300 42.200 L18.300 44 L20 41.500 L22.500 42 L24.500 39 Z"/><path d="M24.500 31 L21.500 24.500 L17.500 20 L11.400 17.300 L11.800 21 L9.500 22.500 L10.800 25 L8.300 27 L9.800 29.500 L7.800 32 L9.600 34 L8.200 36.800 L10.600 38 L10.400 41 L13 41 L13.800 43.600 L16.300 42.200 L18.300 44 L20 41.500 L22.500 42 L24.500 39 Z" transform="translate(62,0) scale(-1,1)"/><path d="M29.600 33 L27.600 25.500 Q26.500 21.600 23 21.800 L19.200 23.600 L23.600 24.800 Q25.400 27 26.600 33 Z"/><path d="M29.600 33 L27.600 25.500 Q26.500 21.600 23 21.800 L19.200 23.600 L23.600 24.800 Q25.400 27 26.600 33 Z" transform="translate(62,0) scale(-1,1)"/><path d="M28.200 17.600 L27.600 12.600 L29.600 13.800 L31 9 L32.400 13.800 L34.400 12.600 L33.800 17.600 Z"/><path d="M21.500 19.600 L21.200 16 L22.500 16.800 L23.400 14.200 L24.300 16.800 L25.600 16 L25.300 19.600 Z"/><path d="M36.700 19.600 L36.400 16 L37.700 16.800 L38.600 14.200 L39.500 16.800 L40.800 16 L40.500 19.600 Z"/><path d="M28.500 30 H33.500 V46 H28.500 Z"/><path d="M25 44.500 L21 46 L20.600 50.500 L23.500 49.200 L24.500 51.500 L26.600 48 L28.500 46 Z"/><path d="M37 44.500 L41 46 L41.400 50.500 L38.500 49.200 L37.500 51.500 L35.400 48 L33.500 46 Z"/><path d="M31 47 L27 50.500 L22.200 52.500 L24.500 55.500 L27 54.200 L27.600 58 L30 56.200 L31 60.200 L32 56.200 L34.400 58 L35 54.200 L37.500 55.500 L39.800 52.500 L35 50.500 Z"/><path d="M11.800 40 L13 39.400 L19 52 L17.800 52.600 Z"/><circle cx="18.300" cy="53" r="1.900"/><circle cx="47" cy="49.300" r="3.100"/><path d="M46.400 42.500 H47.600 V46.500 H46.400 Z M45.300 43.700 H48.700 V44.700 H45.300Z"/><path d="M40.500 49.500 L44.500 48.600 L44.800 50 L40.800 51 Z"/></g><path d="M25.300 31.300 H37.100 V42.500 Q37.100 44 31.200 45.600 Q25.300 44 25.300 42.500 Z" fill="#d92a1e"/><path d="M27.500 40.500 L28.500 35 L30.500 33.500 L31 35.500 L33 34 L35 36.500 L34.600 41 L32.500 40 L31 42.500 L29.500 40.500 Z" fill="#efefef"/></svg>
<div class="b" style="left:450px;top:54px;width:24px;height:24px;background:#e6e6e6;border:1px solid #d4d4d4;border-radius:3px"></div>
<svg style="left:457px;top:61px" width="10" height="10" viewBox="0 0 10 10"><path d="M5 .5 V9.500 M.5 5 H9.500" stroke="#222" stroke-width="2"/></svg>
<span class="t" style="left:492.00px;top:53.74px;font-size:13.5px;color:#3c6ea6;font-weight:normal;transform:scaleX(0.9696);transform-origin:0 50%;">Цитата</span>
<div class="b" style="left:1585px;top:47px;width:42px;height:26.5px;background:#f5f5f5;border:1px solid #e2e2e2;border-radius:2px"></div>
<svg style="left:1588px;top:49px" width="24" height="23" viewBox="0 0 24 23"><defs><radialGradient id="emg" cx=".4" cy=".4" r=".7"><stop offset="0" stop-color="#ffe23a"/><stop offset=".6" stop-color="#f6b820"/><stop offset="1" stop-color="#e08a10"/></radialGradient></defs><circle cx="12.500" cy="14" r="7.700" fill="url(#emg)"/><path d="M2.200 7.500 Q3 1.200 12 .8 Q21 1.200 22 7 L21.500 9 Q12 5.500 3 9.500 Z" fill="#fafafa" stroke="#9a9a9a" stroke-width=".5"/><path d="M3.600 8.300 Q12 4.600 21 8 L21.300 10.200 Q12 7.300 4 10.800 Z" fill="#20242c"/><path d="M10 5.600 Q12 2.600 14 5.600 Z" fill="#e0a020"/><circle cx="9.800" cy="13" r="1.900" fill="#fff" stroke="#777" stroke-width=".5"/><circle cx="14.800" cy="13" r="1.900" fill="#fff" stroke="#777" stroke-width=".5"/><circle cx="10" cy="13.100" r=".8" fill="#222"/><circle cx="15" cy="13.100" r=".8" fill="#222"/><path d="M10 17.300 Q12.800 19.300 15.600 17" fill="none" stroke="#8a4a08" stroke-width=".9"/><path d="M2.600 13 Q5 11.500 6.800 13.500 L7.300 19.500 Q4.500 21.500 2.500 19 Z" fill="#f8f8f8" stroke="#9a9a9a" stroke-width=".5"/></svg>
<span class="t" style="left:1615.16px;top:48.22px;font-size:12px;color:#222;font-weight:normal;">1</span>
<span class="t" style="left:1465.70px;top:73.72px;font-size:12px;color:#2e2e2e;font-weight:normal;transform:scaleX(1.0001);transform-origin:0 50%;">Smokedog_rnd отреагировал</span>
<div class="b" style="left:1646.5px;top:51px;width:30px;height:30px;background:radial-gradient(circle at 45% 35%,#8f8f8f 0,#747474 55%,#686868 100%);border-radius:15px;box-shadow:0 1px 2px rgba(0,0,0,.25)"></div>
<svg style="left:1654px;top:58.500px" width="15" height="15" viewBox="0 0 15 15"><path d="M7.500 0 V15 M0 7.500 H15" stroke="#fff" stroke-width="2.700"/></svg>
<div class="b" style="left:250.7px;top:950.7px;width:40.3px;height:40px;background:#8d9197;border-radius:2px"></div>
<svg style="left:266px;top:963px" width="10" height="16" viewBox="0 0 10 16"><path d="M8.600 1 L1.800 8 L8.600 15" fill="none" stroke="#fff" stroke-width="2"/></svg>
<span class="t" style="left:306.70px;top:950.20px;font-size:11px;color:#454545;font-weight:bold;transform:scaleX(0.9529);transform-origin:0 50%;">ПЕРЕЙТИ К СПИСКУ ТЕМ</span>
<span class="t" style="left:306.70px;top:970.23px;font-size:13px;color:#555;font-weight:normal;transform:scaleX(1.0339);transform-origin:0 50%;">Модпаки</span>
<div class="b" style="left:1716px;top:903px;width:70px;height:69.5px;background:rgba(168,188,204,.92);border-radius:3px"></div>
<svg style="left:1739px;top:926px" width="24" height="24" viewBox="0 0 24 24"><path d="M2 12.500 L12 3 L22 12.500 M2 21.500 L12 12 L22 21.500" fill="none" stroke="#e9eef3" stroke-width="2.600"/></svg>
<div class="b" style="left:1806.5px;top:44.5px;width:14.5px;height:948.5px;background:#2b2b2b"></div>
<svg style="left:1808.500px;top:49px" width="10" height="7" viewBox="0 0 10 7"><path d="M5 0 L10 7 H0Z" fill="#bdbdbd"/></svg>
<svg style="left:1808.500px;top:981px" width="10" height="7" viewBox="0 0 10 7"><path d="M5 7 L10 0 H0Z" fill="#bdbdbd"/></svg>
<div class="b" style="left:1809.5px;top:878px;width:8px;height:73.5px;background:#9f9f9f;border-radius:4px"></div>
<!-- app -->
<div class="b" style="left:204px;top:115px;width:1523px;height:798px;background:#e3e3e3;border-radius:7.500px 7.500px 2px 7.500px;box-shadow:0 0 2px rgba(0,0,0,.3);overflow:hidden"></div>
<div class="b" style="left:204px;top:115px;width:1523px;height:49px;background:#020814;border-radius:7.500px 7.500px 0 0"></div>
<div class="b" style="left:287px;top:115px;width:1px;height:49px;background:#3a3f4a"></div>
<svg style="left:226.900px;top:120.600px" width="37.500" height="36.400" viewBox="0 0 37.500 36.400"><defs><clipPath id="lgc"><rect width="37.500" height="36.400" rx="3.800"/></clipPath></defs><g clip-path="url(#lgc)"><rect width="37.500" height="36.400" fill="#fff"/><path d="M0 26.500 Q15.400 6 36 0 L37.500 0 L37.500 12.200 Q18.750 13 0 29.500 Z" fill="#020814"/><path d="M0 30.500 Q18.750 17.400 37.500 17 L37.500 20 Q18.750 19.600 0 31.500 Z" fill="#020814"/></g></svg>
<div class="b" style="left:448.7px;top:115px;width:95px;height:49px;background:#1f4ea3"></div>
<span class="t" style="left:314.00px;top:127.83px;font-size:18.5px;color:#fff;font-weight:bold;transform:scaleX(0.7315);transform-origin:0 50%;-webkit-text-stroke:0.2px #fff;">Выбор клиента</span>
<span class="t" style="left:474.00px;top:127.83px;font-size:18.5px;color:#fff;font-weight:bold;transform:scaleX(0.7331);transform-origin:0 50%;-webkit-text-stroke:0.2px #fff;">Моды</span>
<span class="t" style="left:569.50px;top:127.83px;font-size:18.5px;color:#fff;font-weight:bold;transform:scaleX(0.7593);transform-origin:0 50%;-webkit-text-stroke:0.2px #fff;">Настройки</span>
<div class="b" style="left:1510px;top:124px;width:51px;height:10px;background:#fff"></div>
<div class="b" style="left:1510px;top:134px;width:51px;height:10px;background:#3b51a8"></div>
<div class="b" style="left:1510px;top:143.3px;width:51px;height:10.4px;background:#e0242c"></div>
<span class="t" style="left:1565.50px;top:127.74px;font-size:13.5px;color:#a9a9a9;font-weight:bold;transform:scaleX(0.7847);transform-origin:0 50%;-webkit-text-stroke:0.2px #a9a9a9;">Русский</span>
<div class="b" style="left:1658px;top:145px;width:15.5px;height:1px;background:#9a9a9a"></div>
<div class="b" style="left:1683px;top:133px;width:14px;height:13px;border:1px solid #9a9a9a"></div>
<svg style="left:1709.500px;top:133px" width="12" height="13" viewBox="0 0 12 13"><path d="M.5 .5 L11.500 12.500 M11.500 .5 L.5 12.500" stroke="#9a9a9a" stroke-width="1.100"/></svg>
<div class="b" style="left:287px;top:179px;width:1px;height:734px;background:#333"></div>
<div class="b" style="left:588px;top:179px;width:1px;height:734px;background:#333"></div>
<div class="b" style="left:1428px;top:179px;width:1px;height:654.5px;background:#333"></div>
<div class="b" style="left:588px;top:833px;width:1139px;height:1px;background:#333"></div>
<div class="b" style="left:208px;top:179px;width:2.2px;height:75px;background:#1f4ea3"></div>
<svg style="left:0;top:0" width="1920" height="1080" viewBox="0 0 1920 1080" fill="none" stroke="#363636" stroke-width="1.800" stroke-linejoin="round">
<g stroke="#1f4ea3" stroke-width="2"><circle cx="246.450" cy="201.700" r="12.700"/><circle cx="246.450" cy="201.700" r="4.700"/><path d="M246.450 184.800 V192.700 M246.450 210.700 V218.600 M229.300 201.700 H237.400 M255.500 201.700 H263.600"/></g>
<rect x="229.900" y="260.300" width="33.700" height="13.900" rx="6.950"/><circle cx="236.850" cy="267.250" r="6.950"/>
<rect x="229.900" y="279.400" width="33.700" height="13.900" rx="6.950"/><circle cx="256.650" cy="286.350" r="6.950"/>
<path d="M231.900 334.900 H260.800 V359.200 L246.350 368.400 L231.900 359.200 Z" stroke-linejoin="miter"/>
<path d="M237.400 344.100 H252.300 L256.900 349.500 L252.300 354.900 H237.400 Z M249.300 344.100 L244.600 354.900" stroke-linejoin="miter"/>
<path d="M247.460 409.640 L256.030 418.200 L253.940 425.380 L260.660 423.060 L263.670 425.840 L253.480 435.800 Q248.850 438.700 243.060 434.870 L234.960 443.900 L229.180 438.340 L238.200 429.800 Q233.600 423.700 237.740 419.820 Z M237.740 419.820 L253.480 435.800" stroke-linejoin="miter"/>
<path d="M249.800 492.500 L234.960 508.500 M256.700 497.400 Q254.200 498.500 252.560 501.500 L239.800 513.100 M231.700 506.600 L241.400 516.350 M235.900 512.200 L229.400 518.400"/>
<path d="M228.940 484.870 L236.800 486 L258.570 508 L253.500 513.100 L230.800 492.500 Z" fill="#e3e3e3" stroke-linejoin="miter"/>
<path d="M251.600 516.600 L261.350 506.600 M256.700 511.700 L263.200 518.400"/>
<circle cx="246.440" cy="564.050" r="4.350"/><path d="M246.440 568.400 V592.800 M242.100 575.150 H250.900 M235.700 578.400 H231.950 A14.490 14.490 0 0 0 260.930 578.400 H257.400"/>
<path d="M236.350 644.800 H232.400 Q229.400 644.800 229.400 647.800 V655.700 Q229.400 658.700 232.400 658.700 H236.350 Z M236.350 644.800 L246.500 636.700 Q250.900 633.800 250.900 639 V664.500 Q250.900 669.700 246.500 666.800 L236.350 658.700"/>
<path d="M255.560 646.200 Q260.700 651.750 255.560 657.300 M259.040 640.400 Q268.400 651.750 259.040 663.100" stroke-linecap="butt"/>
<rect x="229.200" y="710.600" width="14.300" height="13" rx="1.500"/><circle cx="255.400" cy="717.300" r="6.700"/><path d="M237 729.500 L244.800 742.800 H229.200 Z M251.200 729.800 H259.600 L263.700 736.500 L259.600 743.200 H251.200 L247.200 736.500 Z" stroke-linejoin="miter"/>
<path d="M231.800 860 H259.300 Q262.400 860 262.400 863.100 V881.800 Q262.400 884.900 259.300 884.900 H236.800 L228.600 893.200 V863.100 Q228.600 860 231.800 860 Z"/>
<path d="M235 866.800 H256 M235 872.500 H256 M235 878.200 H250"/>
</svg>
<span class="t" style="left:230.20px;top:224.87px;font-size:9.2px;color:#1f4ea3;font-weight:bold;transform:scaleX(0.7789);transform-origin:0 50%;-webkit-text-stroke:0.2px #1f4ea3;">Прицелы</span>
<span class="t" style="left:227.90px;top:294.37px;font-size:9.2px;color:#363636;font-weight:bold;transform:scaleX(0.8022);transform-origin:0 50%;-webkit-text-stroke:0.3px #363636;">Элементы</span>
<span class="t" style="left:224.75px;top:306.87px;font-size:9.2px;color:#363636;font-weight:bold;transform:scaleX(0.7900);transform-origin:0 50%;-webkit-text-stroke:0.3px #363636;">интерфейса</span>
<span class="t" style="left:218.90px;top:374.97px;font-size:9.2px;color:#363636;font-weight:bold;transform:scaleX(0.7983);transform-origin:0 50%;-webkit-text-stroke:0.3px #363636;">Панели команд</span>
<span class="t" style="left:221.90px;top:444.37px;font-size:9.2px;color:#363636;font-weight:bold;transform:scaleX(0.8005);transform-origin:0 50%;-webkit-text-stroke:0.3px #363636;">Камуфляжи и</span>
<span class="t" style="left:232.75px;top:456.87px;font-size:9.2px;color:#363636;font-weight:bold;transform:scaleX(0.8055);transform-origin:0 50%;-webkit-text-stroke:0.3px #363636;">модели</span>
<span class="t" style="left:233.40px;top:519.37px;font-size:9.2px;color:#363636;font-weight:bold;transform:scaleX(0.7783);transform-origin:0 50%;-webkit-text-stroke:0.3px #363636;">Боевой</span>
<span class="t" style="left:226.65px;top:531.87px;font-size:9.2px;color:#363636;font-weight:bold;transform:scaleX(0.7976);transform-origin:0 50%;-webkit-text-stroke:0.3px #363636;">интерфейс</span>
<span class="t" style="left:238.05px;top:599.97px;font-size:9.2px;color:#363636;font-weight:bold;transform:scaleX(0.7786);transform-origin:0 50%;-webkit-text-stroke:0.3px #363636;">Порт</span>
<span class="t" style="left:229.00px;top:669.37px;font-size:9.2px;color:#363636;font-weight:bold;transform:scaleX(0.7861);transform-origin:0 50%;-webkit-text-stroke:0.3px #363636;">Звуковые</span>
<span class="t" style="left:220.90px;top:681.87px;font-size:9.2px;color:#363636;font-weight:bold;transform:scaleX(0.8053);transform-origin:0 50%;-webkit-text-stroke:0.3px #363636;">модификации</span>
<span class="t" style="left:233.40px;top:750.17px;font-size:9.2px;color:#363636;font-weight:bold;transform:scaleX(0.8009);transform-origin:0 50%;-webkit-text-stroke:0.3px #363636;">Прочее</span>
<div class="b" style="left:252.25px;top:330.2px;width:16px;height:16px;background:#5aaef6;border-radius:8px"></div>
<span class="t" style="left:257.81px;top:326.40px;font-size:11px;color:#fff;font-weight:bold;transform:scaleX(0.8000);transform-origin:0 50%;-webkit-text-stroke:0.2px #fff;">6</span>
<div class="b" style="left:250.1px;top:479.9px;width:16px;height:16px;background:#5aaef6;border-radius:8px"></div>
<span class="t" style="left:253.22px;top:476.10px;font-size:11px;color:#fff;font-weight:bold;transform:scaleX(0.8000);transform-origin:0 50%;-webkit-text-stroke:0.2px #fff;">12</span>
<div class="b" style="left:252.2px;top:555px;width:16px;height:16px;background:#5aaef6;border-radius:8px"></div>
<span class="t" style="left:257.76px;top:551.20px;font-size:11px;color:#fff;font-weight:bold;transform:scaleX(0.8000);transform-origin:0 50%;-webkit-text-stroke:0.2px #fff;">5</span>
<div class="b" style="left:293px;top:186px;width:18px;height:18px;border:1.2px solid #3a3a3a;border-radius:4px;background:#e8e8e8"></div>
<span class="t" style="left:323.70px;top:183.40px;font-size:16.5px;color:#454545;font-weight:bold;transform:scaleX(0.7591);transform-origin:0 50%;-webkit-text-stroke:0.1px #454545;">Динамические прицелы</span>
<svg style="left:480.1px;top:191px" width="15" height="9" viewBox="0 0 15 9"><path d="M.6 .6 L7.500 8 L14.400 .6" fill="none" stroke="#222" stroke-width="1.300"/></svg>
<div class="b" style="left:325px;top:216px;width:18px;height:18px;border:1.2px solid #3a3a3a;border-radius:4px;background:#e8e8e8"></div>
<span class="t" style="left:355.80px;top:213.39px;font-size:16.2px;color:#3b3b3b;font-weight:bold;transform:scaleX(0.7677);transform-origin:0 50%;-webkit-text-stroke:0.2px #3b3b3b;">Smart Horizon</span>
<div class="b" style="left:325px;top:246px;width:18px;height:18px;border:1.2px solid #3a3a3a;border-radius:4px;background:#e8e8e8"></div>
<span class="t" style="left:355.80px;top:243.39px;font-size:16.2px;color:#3b3b3b;font-weight:bold;transform:scaleX(0.7604);transform-origin:0 50%;-webkit-text-stroke:0.2px #3b3b3b;">Nomogram Classic</span>
<div class="b" style="left:325px;top:276px;width:18px;height:18px;border:1.2px solid #3a3a3a;border-radius:4px;background:#e8e8e8"></div>
<span class="t" style="left:355.80px;top:273.39px;font-size:16.2px;color:#3b3b3b;font-weight:bold;transform:scaleX(0.7544);transform-origin:0 50%;-webkit-text-stroke:0.2px #3b3b3b;">Nomogram Classic Top</span>
<div class="b" style="left:325px;top:306px;width:18px;height:18px;border:1.2px solid #3a3a3a;border-radius:4px;background:#e8e8e8"></div>
<span class="t" style="left:355.80px;top:303.39px;font-size:16.2px;color:#3b3b3b;font-weight:bold;transform:scaleX(0.7500);transform-origin:0 50%;-webkit-text-stroke:0.2px #3b3b3b;">Nomogram Classic Top Web</span>
<div class="b" style="left:325px;top:336px;width:18px;height:18px;border:1.2px solid #3a3a3a;border-radius:4px;background:#e8e8e8"></div>
<span class="t" style="left:355.80px;top:333.39px;font-size:16.2px;color:#3b3b3b;font-weight:bold;transform:scaleX(0.7634);transform-origin:0 50%;-webkit-text-stroke:0.2px #3b3b3b;">Nomogram Classic High Visibility</span>
<div class="b" style="left:325px;top:366px;width:18px;height:18px;border:1.2px solid #3a3a3a;border-radius:4px;background:#e8e8e8"></div>
<span class="t" style="left:355.80px;top:363.39px;font-size:16.2px;color:#3b3b3b;font-weight:bold;transform:scaleX(0.7719);transform-origin:0 50%;-webkit-text-stroke:0.2px #3b3b3b;">Nomogram Modern</span>
<div class="b" style="left:325px;top:396px;width:18px;height:18px;border:1.2px solid #3a3a3a;border-radius:4px;background:#e8e8e8"></div>
<span class="t" style="left:355.80px;top:393.39px;font-size:16.2px;color:#3b3b3b;font-weight:bold;transform:scaleX(0.7672);transform-origin:0 50%;-webkit-text-stroke:0.2px #3b3b3b;">Nomogram Modern Green</span>
<div class="b" style="left:325px;top:426px;width:18px;height:18px;border:1.2px solid #3a3a3a;border-radius:4px;background:#e8e8e8"></div>
<span class="t" style="left:355.80px;top:423.39px;font-size:16.2px;color:#3b3b3b;font-weight:bold;transform:scaleX(0.7808);transform-origin:0 50%;-webkit-text-stroke:0.2px #3b3b3b;">Nomogram Stiv372</span>
<div class="b" style="left:293px;top:456px;width:18px;height:18px;border:1.2px solid #3a3a3a;border-radius:4px;background:#e8e8e8"></div>
<span class="t" style="left:323.70px;top:453.40px;font-size:16.5px;color:#454545;font-weight:bold;transform:scaleX(0.7431);transform-origin:0 50%;-webkit-text-stroke:0.1px #454545;">Статичные прицелы</span>
<svg style="left:455.8px;top:461px" width="15" height="9" viewBox="0 0 15 9"><path d="M.6 .6 L7.500 8 L14.400 .6" fill="none" stroke="#222" stroke-width="1.300"/></svg>
<div class="b" style="left:325px;top:486px;width:18px;height:18px;border:1.2px solid #3a3a3a;border-radius:4px;background:#e8e8e8"></div>
<span class="t" style="left:355.80px;top:483.39px;font-size:16.2px;color:#3b3b3b;font-weight:bold;transform:scaleX(0.7040);transform-origin:0 50%;-webkit-text-stroke:0.2px #3b3b3b;">ARP V1</span>
<div class="b" style="left:325px;top:516px;width:18px;height:18px;border:1.2px solid #3a3a3a;border-radius:4px;background:#e8e8e8"></div>
<span class="t" style="left:355.80px;top:513.39px;font-size:16.2px;color:#3b3b3b;font-weight:bold;transform:scaleX(0.7383);transform-origin:0 50%;-webkit-text-stroke:0.2px #3b3b3b;">ARP V2</span>
<div class="b" style="left:325px;top:546px;width:18px;height:18px;border:1.2px solid #3a3a3a;border-radius:4px;background:#e8e8e8"></div>
<span class="t" style="left:355.80px;top:543.39px;font-size:16.2px;color:#3b3b3b;font-weight:bold;transform:scaleX(0.7572);transform-origin:0 50%;-webkit-text-stroke:0.2px #3b3b3b;">Birusa Dotted Green</span>
<div class="b" style="left:325px;top:576px;width:18px;height:18px;border:1.2px solid #3a3a3a;border-radius:4px;background:#e8e8e8"></div>
<span class="t" style="left:355.80px;top:573.39px;font-size:16.2px;color:#3b3b3b;font-weight:bold;transform:scaleX(0.7571);transform-origin:0 50%;-webkit-text-stroke:0.2px #3b3b3b;">DeCease Black</span>
<div class="b" style="left:325px;top:606px;width:18px;height:18px;border:1.2px solid #3a3a3a;border-radius:4px;background:#e8e8e8"></div>
<span class="t" style="left:355.80px;top:603.39px;font-size:16.2px;color:#3b3b3b;font-weight:bold;transform:scaleX(0.7256);transform-origin:0 50%;-webkit-text-stroke:0.2px #3b3b3b;">Дельфин V1</span>
<div class="b" style="left:325px;top:636px;width:18px;height:18px;border:1.2px solid #3a3a3a;border-radius:4px;background:#e8e8e8"></div>
<span class="t" style="left:355.80px;top:633.39px;font-size:16.2px;color:#3b3b3b;font-weight:bold;transform:scaleX(0.7488);transform-origin:0 50%;-webkit-text-stroke:0.2px #3b3b3b;">Дельфин V2</span>
<div class="b" style="left:325px;top:666px;width:18px;height:18px;border:1.2px solid #3a3a3a;border-radius:4px;background:#e8e8e8"></div>
<span class="t" style="left:355.80px;top:663.39px;font-size:16.2px;color:#3b3b3b;font-weight:bold;transform:scaleX(0.7488);transform-origin:0 50%;-webkit-text-stroke:0.2px #3b3b3b;">Дельфин V3</span>
<div class="b" style="left:325px;top:696px;width:18px;height:18px;border:1.2px solid #3a3a3a;border-radius:4px;background:#e8e8e8"></div>
<span class="t" style="left:355.80px;top:693.39px;font-size:16.2px;color:#3b3b3b;font-weight:bold;transform:scaleX(0.7387);transform-origin:0 50%;-webkit-text-stroke:0.2px #3b3b3b;">Дельфин V4</span>
<div class="b" style="left:325px;top:726px;width:18px;height:18px;border:1.2px solid #3a3a3a;border-radius:4px;background:#e8e8e8"></div>
<span class="t" style="left:355.80px;top:723.39px;font-size:16.2px;color:#3b3b3b;font-weight:bold;transform:scaleX(0.7488);transform-origin:0 50%;-webkit-text-stroke:0.2px #3b3b3b;">Дельфин V5</span>
<div class="b" style="left:325px;top:756px;width:18px;height:18px;border:1.2px solid #3a3a3a;border-radius:4px;background:#e8e8e8"></div>
<span class="t" style="left:355.80px;top:753.39px;font-size:16.2px;color:#3b3b3b;font-weight:bold;transform:scaleX(0.7448);transform-origin:0 50%;-webkit-text-stroke:0.2px #3b3b3b;">Зелёный лимон V1</span>
<div class="b" style="left:325px;top:786px;width:18px;height:18px;border:1.2px solid #3a3a3a;border-radius:4px;background:#e8e8e8"></div>
<span class="t" style="left:355.80px;top:783.39px;font-size:16.2px;color:#3b3b3b;font-weight:bold;transform:scaleX(0.7560);transform-origin:0 50%;-webkit-text-stroke:0.2px #3b3b3b;">Зелёный лимон V2</span>
<div class="b" style="left:325px;top:816px;width:18px;height:18px;border:1.2px solid #3a3a3a;border-radius:4px;background:#e8e8e8"></div>
<span class="t" style="left:355.80px;top:813.39px;font-size:16.2px;color:#3b3b3b;font-weight:bold;transform:scaleX(0.7560);transform-origin:0 50%;-webkit-text-stroke:0.2px #3b3b3b;">Зелёный лимон V3</span>
<div class="b" style="left:571.3px;top:179px;width:16.3px;height:655px;background:#c9cacd;border-radius:2px"></div>
<div class="b" style="left:571.3px;top:198.8px;width:16.3px;height:172.5px;background:#858a8e;border-radius:2px 2px 3px 3px"></div>
<svg style="left:573.800px;top:184.500px" width="11" height="7" viewBox="0 0 11 7"><path d="M.6 6.300 L5.500 1 L10.400 6.300" fill="none" stroke="#8a8d92" stroke-width="1.200"/></svg>
<svg style="left:573.300px;top:820px" width="12" height="8" viewBox="0 0 12 8"><path d="M.6 .8 L6 7 L11.400 .8" fill="none" stroke="#333" stroke-width="1.300"/></svg>
<div class="b" style="left:313px;top:859.2px;width:123px;height:29.6px;background:#1f4ea3;border-radius:3px"></div>
<span class="t" style="left:335.80px;top:862.00px;font-size:16.5px;color:#fff;font-weight:bold;transform:scaleX(0.7241);transform-origin:0 50%;-webkit-text-stroke:0.2px #fff;">Выбрать все</span>
<div class="b" style="left:440.2px;top:859.2px;width:123px;height:29.6px;border:1px solid #8e9399;border-radius:3px"></div>
<span class="t" style="left:472.20px;top:862.00px;font-size:16.5px;color:#8e9399;font-weight:bold;transform:scaleX(0.7321);transform-origin:0 50%;-webkit-text-stroke:0.2px #8e9399;">Сбросить</span>
<svg style="left:0;top:0" width="1920" height="1080" viewBox="0 0 1920 1080">
<defs><linearGradient id="cg" gradientUnits="userSpaceOnUse" x1="0" y1="192" x2="0" y2="631"><stop offset="0" stop-color="#02113a"/><stop offset=".25" stop-color="#031b52"/><stop offset=".5" stop-color="#03246c"/><stop offset=".75" stop-color="#042f88"/><stop offset="1" stop-color="#04379f"/></linearGradient><clipPath id="cc"><path clip-rule="evenodd" d="M828.1 411.25 A180.5 180.5 0 1 0 1189.1 411.25 A180.5 180.5 0 1 0 828.1 411.25 Z M853.6 411.25 A155 155 0 1 1 1163.6 411.25 A155 155 0 1 1 853.6 411.25 Z"/><path clip-rule="evenodd" d="M930.8 411.25 A77.8 77.8 0 1 0 1086.4 411.25 A77.8 77.8 0 1 0 930.8 411.25 Z M956.8 411.25 A51.8 51.8 0 1 1 1060.4 411.25 A51.8 51.8 0 1 1 956.8 411.25 Z"/><rect x="995.500" y="191.800" width="26.200" height="103.300"/><rect x="995.500" y="527.700" width="26.200" height="103.300"/><rect x="788.800" y="398.200" width="103.500" height="26.100"/><rect x="1124.800" y="398.200" width="103.300" height="26.100"/></clipPath></defs>
<g clip-path="url(#cc)"><rect x="780" y="185" width="460" height="455" fill="url(#cg)"/><g fill="none" stroke="#1857dc" stroke-width=".9" opacity=".9"><path d="M1022 200 C1012 240 990 260 996 300 C1000 330 1030 330 1025 296"/><path d="M980 225 C970 250 960 262 948 275"/><path d="M948 235 C930 260 922 275 915 290"/><path d="M895 268 C884 290 886 300 890 312"/><path d="M1030 228 C1027 240 1028 250 1030 258"/><path d="M1055 236 C1060 262 1110 280 1155 305"/><path d="M830 370 C850 395 870 410 885 430"/><path d="M1000 335 C1010 342 1020 352 1028 362"/><path d="M942 365 C952 375 958 385 961 392"/><path d="M960 348 C975 355 985 362 990 368"/><path d="M1125 424 C1160 420 1190 400 1228 410"/><path d="M1155 362 C1165 365 1175 364 1182 362"/><path d="M1160 392 C1170 390 1180 387 1186 385"/><path d="M1060 415 C1070 422 1080 424 1088 424"/><path d="M835 440 C850 470 860 480 872 492"/><path d="M1010 462 C1009 475 1008 482 1007 490"/><path d="M890 560 C910 552 922 548 930 540"/><path d="M958 585 C968 578 975 570 978 562"/><path d="M1045 562 C1048 570 1050 578 1052 585"/><path d="M995 590 C1003 584 1012 582 1022 584"/><path d="M1150 490 C1160 470 1175 455 1186 440"/><path d="M1100 560 C1118 552 1130 542 1140 530"/></g></g>
</svg>
<span class="t" style="left:776.30px;top:657.27px;font-size:37.5px;color:#040b18;font-weight:bold;transform:scaleX(0.7847);transform-origin:0 50%;-webkit-text-stroke:1.2px #040b18;">Прицелы</span>
<span class="t" style="left:776.30px;top:728.75px;font-size:14px;color:#454545;font-weight:bold;transform:scaleX(0.7783);transform-origin:0 50%;-webkit-text-stroke:0.2px #454545;">Данный раздел содержит модифицированные прицелы, маркеры главного калибра</span>
<span class="t" style="left:776.30px;top:746.45px;font-size:14px;color:#454545;font-weight:bold;transform:scaleX(0.7668);transform-origin:0 50%;-webkit-text-stroke:0.2px #454545;">и камеры Zeiss.</span>
<span class="t" style="left:613.80px;top:861.79px;font-size:16.2px;color:#8e9399;font-weight:bold;transform:scaleX(0.7694);transform-origin:0 50%;-webkit-text-stroke:0.2px #8e9399;">Играть в "Мир Кораблей" RU 25.11.0.0</span>
<div class="b" style="left:1453px;top:854px;width:250px;height:39.7px;background:#1f4ea3;border-radius:4px"></div>
<span class="t" style="left:1546.20px;top:862.41px;font-size:23px;color:#fff;font-weight:bold;transform:scaleX(0.8032);transform-origin:0 50%;-webkit-text-stroke:0.2px #fff;">Играть</span>
<svg style="left:1713px;top:899px" width="14" height="14" viewBox="0 0 14 14"><path d="M1 13.500 L13.500 1" stroke="#333" stroke-width="2.200" fill="none"/></svg>
<span class="t" style="left:1443.90px;top:180.12px;font-size:17.5px;color:#454545;font-weight:bold;transform:scaleX(0.7854);transform-origin:0 50%;">Элементы интерфейса</span>
<span class="t" style="left:1443.90px;top:228.31px;font-size:17.5px;color:#454545;font-weight:bold;transform:scaleX(0.7979);transform-origin:0 50%;">Панели команд</span>
<span class="t" style="left:1443.90px;top:276.31px;font-size:17.5px;color:#454545;font-weight:bold;transform:scaleX(0.7736);transform-origin:0 50%;">Боевой интерфейс</span>
<span class="t" style="left:1443.90px;top:650.02px;font-size:17.5px;color:#454545;font-weight:bold;transform:scaleX(0.7808);transform-origin:0 50%;">Порт</span>
<span class="t" style="left:1443.90px;top:698.32px;font-size:17.5px;color:#454545;font-weight:bold;transform:scaleX(0.7978);transform-origin:0 50%;">Прочее</span>
<span class="t" style="left:1453.90px;top:203.82px;font-size:12.2px;color:#3d3d3d;font-weight:bold;transform:scaleX(0.7951);transform-origin:0 50%;-webkit-text-stroke:0.2px #3d3d3d;">Индикаторы обнаружения -&gt; Индикаторы «Ва...</span>
<svg style="left:1696px;top:209.5px" width="12" height="12" viewBox="0 0 12 12"><path d="M.7 .7 L11.300 11.300 M11.300 .7 L.7 11.300" stroke="#111" stroke-width="1.500"/></svg>
<span class="t" style="left:1453.90px;top:251.92px;font-size:12.2px;color:#3d3d3d;font-weight:bold;transform:scaleX(0.7767);transform-origin:0 50%;-webkit-text-stroke:0.2px #3d3d3d;">Верхняя панель интерфейса -&gt; Трюм-рей</span>
<svg style="left:1696px;top:257.6px" width="12" height="12" viewBox="0 0 12 12"><path d="M.7 .7 L11.300 11.300 M11.300 .7 L.7 11.300" stroke="#111" stroke-width="1.500"/></svg>
<span class="t" style="left:1453.90px;top:300.32px;font-size:12.2px;color:#3d3d3d;font-weight:bold;transform:scaleX(0.8001);transform-origin:0 50%;-webkit-text-stroke:0.2px #3d3d3d;">Экран загрузки боя -&gt; Расширенный экран заг...</span>
<svg style="left:1696px;top:306px" width="12" height="12" viewBox="0 0 12 12"><path d="M.7 .7 L11.300 11.300 M11.300 .7 L.7 11.300" stroke="#111" stroke-width="1.500"/></svg>
<span class="t" style="left:1453.90px;top:325.32px;font-size:12.2px;color:#3d3d3d;font-weight:bold;transform:scaleX(0.7847);transform-origin:0 50%;-webkit-text-stroke:0.2px #3d3d3d;">Маркеры кораблей -&gt; Настраиваемые маркеры</span>
<svg style="left:1696px;top:331px" width="12" height="12" viewBox="0 0 12 12"><path d="M.7 .7 L11.300 11.300 M11.300 .7 L.7 11.300" stroke="#111" stroke-width="1.500"/></svg>
<span class="t" style="left:1453.90px;top:350.22px;font-size:12.2px;color:#3d3d3d;font-weight:bold;transform:scaleX(0.7782);transform-origin:0 50%;-webkit-text-stroke:0.2px #3d3d3d;">Полоса боеспособности -&gt; Индикатор HP</span>
<svg style="left:1696px;top:355.9px" width="12" height="12" viewBox="0 0 12 12"><path d="M.7 .7 L11.300 11.300 M11.300 .7 L.7 11.300" stroke="#111" stroke-width="1.500"/></svg>
<span class="t" style="left:1453.90px;top:375.02px;font-size:12.2px;color:#3d3d3d;font-weight:bold;transform:scaleX(0.7708);transform-origin:0 50%;-webkit-text-stroke:0.2px #3d3d3d;">Таймеры дымов -&gt; Таймер «BADoBEST's Style»</span>
<svg style="left:1696px;top:380.7px" width="12" height="12" viewBox="0 0 12 12"><path d="M.7 .7 L11.300 11.300 M11.300 .7 L.7 11.300" stroke="#111" stroke-width="1.500"/></svg>
<span class="t" style="left:1453.90px;top:400.02px;font-size:12.2px;color:#3d3d3d;font-weight:bold;transform:scaleX(0.7862);transform-origin:0 50%;-webkit-text-stroke:0.2px #3d3d3d;">Миникарта и планшет -&gt; Миникарта от AutoSpy</span>
<svg style="left:1696px;top:405.7px" width="12" height="12" viewBox="0 0 12 12"><path d="M.7 .7 L11.300 11.300 M11.300 .7 L.7 11.300" stroke="#111" stroke-width="1.500"/></svg>
<span class="t" style="left:1453.90px;top:425.02px;font-size:12.2px;color:#3d3d3d;font-weight:bold;transform:scaleX(0.7610);transform-origin:0 50%;-webkit-text-stroke:0.2px #3d3d3d;">Боевой чат -&gt; Боевой чат от AutoSpy</span>
<svg style="left:1696px;top:430.7px" width="12" height="12" viewBox="0 0 12 12"><path d="M.7 .7 L11.300 11.300 M11.300 .7 L.7 11.300" stroke="#111" stroke-width="1.500"/></svg>
<span class="t" style="left:1453.90px;top:450.02px;font-size:12.2px;color:#3d3d3d;font-weight:bold;transform:scaleX(0.7838);transform-origin:0 50%;-webkit-text-stroke:0.2px #3d3d3d;">Информационные панели -&gt; Информация о це...</span>
<svg style="left:1696px;top:455.7px" width="12" height="12" viewBox="0 0 12 12"><path d="M.7 .7 L11.300 11.300 M11.300 .7 L.7 11.300" stroke="#111" stroke-width="1.500"/></svg>
<span class="t" style="left:1453.90px;top:475.02px;font-size:12.2px;color:#3d3d3d;font-weight:bold;transform:scaleX(0.7818);transform-origin:0 50%;-webkit-text-stroke:0.2px #3d3d3d;">Информационные панели -&gt; Информация о св...</span>
<svg style="left:1696px;top:480.7px" width="12" height="12" viewBox="0 0 12 12"><path d="M.7 .7 L11.300 11.300 M11.300 .7 L.7 11.300" stroke="#111" stroke-width="1.500"/></svg>
<span class="t" style="left:1453.90px;top:500.02px;font-size:12.2px;color:#3d3d3d;font-weight:bold;transform:scaleX(0.7780);transform-origin:0 50%;-webkit-text-stroke:0.2px #3d3d3d;">Точка внимания</span>
<svg style="left:1696px;top:505.7px" width="12" height="12" viewBox="0 0 12 12"><path d="M.7 .7 L11.300 11.300 M11.300 .7 L.7 11.300" stroke="#111" stroke-width="1.500"/></svg>
<span class="t" style="left:1453.90px;top:525.02px;font-size:12.2px;color:#3d3d3d;font-weight:bold;transform:scaleX(0.7938);transform-origin:0 50%;-webkit-text-stroke:0.2px #3d3d3d;">Индикатор обнаружения</span>
<svg style="left:1696px;top:530.7px" width="12" height="12" viewBox="0 0 12 12"><path d="M.7 .7 L11.300 11.300 M11.300 .7 L.7 11.300" stroke="#111" stroke-width="1.500"/></svg>
<span class="t" style="left:1453.90px;top:550.02px;font-size:12.2px;color:#3d3d3d;font-weight:bold;transform:scaleX(0.7654);transform-origin:0 50%;-webkit-text-stroke:0.2px #3d3d3d;">Таймер боя</span>
<svg style="left:1696px;top:555.7px" width="12" height="12" viewBox="0 0 12 12"><path d="M.7 .7 L11.300 11.300 M11.300 .7 L.7 11.300" stroke="#111" stroke-width="1.500"/></svg>
<span class="t" style="left:1453.90px;top:575.02px;font-size:12.2px;color:#3d3d3d;font-weight:bold;transform:scaleX(0.7869);transform-origin:0 50%;-webkit-text-stroke:0.2px #3d3d3d;">Таймер перезарядки</span>
<svg style="left:1696px;top:580.7px" width="12" height="12" viewBox="0 0 12 12"><path d="M.7 .7 L11.300 11.300 M11.300 .7 L.7 11.300" stroke="#111" stroke-width="1.500"/></svg>
<span class="t" style="left:1453.90px;top:600.02px;font-size:12.2px;color:#3d3d3d;font-weight:bold;transform:scaleX(0.7380);transform-origin:0 50%;-webkit-text-stroke:0.2px #3d3d3d;">Часы в бою</span>
<svg style="left:1696px;top:605.7px" width="12" height="12" viewBox="0 0 12 12"><path d="M.7 .7 L11.300 11.300 M11.300 .7 L.7 11.300" stroke="#111" stroke-width="1.500"/></svg>
<span class="t" style="left:1453.90px;top:625.02px;font-size:12.2px;color:#3d3d3d;font-weight:bold;transform:scaleX(0.7764);transform-origin:0 50%;-webkit-text-stroke:0.2px #3d3d3d;">Время захвата</span>
<svg style="left:1696px;top:630.7px" width="12" height="12" viewBox="0 0 12 12"><path d="M.7 .7 L11.300 11.300 M11.300 .7 L.7 11.300" stroke="#111" stroke-width="1.500"/></svg>
<span class="t" style="left:1453.90px;top:673.92px;font-size:12.2px;color:#3d3d3d;font-weight:bold;transform:scaleX(0.7874);transform-origin:0 50%;-webkit-text-stroke:0.2px #3d3d3d;">Изученные перки в рамках</span>
<svg style="left:1696px;top:679.6px" width="12" height="12" viewBox="0 0 12 12"><path d="M.7 .7 L11.300 11.300 M11.300 .7 L.7 11.300" stroke="#111" stroke-width="1.500"/></svg>
<span class="t" style="left:1453.90px;top:721.62px;font-size:12.2px;color:#3d3d3d;font-weight:bold;transform:scaleX(0.7639);transform-origin:0 50%;-webkit-text-stroke:0.2px #3d3d3d;">Старые всплески воды</span>
<svg style="left:1696px;top:727.3px" width="12" height="12" viewBox="0 0 12 12"><path d="M.7 .7 L11.300 11.300 M11.300 .7 L.7 11.300" stroke="#111" stroke-width="1.500"/></svg>
<!-- tabs / widgets -->
<div class="b" style="left:142px;top:996px;width:64px;height:30px;background:#3a3c46;border-radius:8px"></div>
<div class="b" style="left:142px;top:996px;width:31.5px;height:30px;background:#b9bbc0;border-radius:8px"></div>
<svg style="left:149px;top:1002px" width="18" height="18" viewBox="0 0 18 18"><path d="M9 .6 L15.5 3.4 Q17.4 4.2 17.4 6.2 V14 Q17.4 17.4 14 17.4 H4 Q.6 17.4 .6 14 V6.2 Q.6 4.2 2.5 3.4Z" fill="#17181d"/></svg>
<span class="t" style="left:155.28px;top:999.99px;font-size:10.5px;color:#fff;font-weight:bold;">6</span>
<svg style="left:185px;top:1008px" width="11" height="7" viewBox="0 0 11 7"><path d="M.8 1 L5.5 5.6 L10.2 1" fill="none" stroke="#9a9ca6" stroke-width="1.4"/></svg>
<div class="b" style="left:410.5px;top:996px;width:200px;height:30px;background:#3a3c46;border-radius:8px"></div>
<svg style="left:221.7px;top:1003px" width="16" height="16" viewBox="0 0 16 16"><rect width="16" height="16" fill="#04101c"/><path d="M3.5 2.2 H12.5 V9 Q12.5 12 8 14 Q3.5 12 3.5 9 Z" fill="#19c8e8"/><path d="M8 4 V9.5 M5.6 7.6 L8 10 L10.4 7.6" stroke="#04101c" stroke-width="1.5" fill="none"/></svg>
<span class="t" style="left:247.00px;top:1000.03px;font-size:13px;color:#e6e6ea;font-weight:normal;transform:scaleX(1.0031);transform-origin:0 50%;">Новости | «Мир кораблей</span>
<div class="b" style="left:385px;top:999px;width:18px;height:24px;background:linear-gradient(90deg,rgba(0,0,0,0),#22242c 85%)"></div>
<svg style="left:421.7px;top:1003px" width="16" height="16" viewBox="0 0 16 16"><rect width="16" height="16" fill="#04101c"/><path d="M3.5 2.2 H12.5 V9 Q12.5 12 8 14 Q3.5 12 3.5 9 Z" fill="#19c8e8"/><path d="M8 4 V9.5 M5.6 7.6 L8 10 L10.4 7.6" stroke="#04101c" stroke-width="1.5" fill="none"/></svg>
<span class="t" style="left:447.00px;top:1000.03px;font-size:13px;color:#fff;font-weight:normal;transform:scaleX(1.0143);transform-origin:0 50%;">[ALL] МОСТ - Страниц</span>
<div class="b" style="left:568px;top:999px;width:18px;height:24px;background:linear-gradient(90deg,rgba(0,0,0,0),#3a3c46 85%)"></div>
<svg style="left:621.7px;top:1003px" width="16" height="16" viewBox="0 0 16 16"><rect width="16" height="16" fill="#04101c"/><path d="M3.5 2.2 H12.5 V9 Q12.5 12 8 14 Q3.5 12 3.5 9 Z" fill="#19c8e8"/><path d="M8 4 V9.5 M5.6 7.6 L8 10 L10.4 7.6" stroke="#04101c" stroke-width="1.5" fill="none"/></svg>
<div class="b" style="left:648.5px;top:1006.5px;width:2.6px;height:9px;background:#d6d6da"></div>
<div class="b" style="left:653.2px;top:1006.5px;width:2.6px;height:9px;background:#d6d6da"></div>
<span class="t" style="left:661.00px;top:1000.03px;font-size:13px;color:#e6e6ea;font-weight:normal;transform:scaleX(1.0078);transform-origin:0 50%;">[25.11.0] Пак. Боевая К</span>
<div class="b" style="left:784px;top:999px;width:18px;height:24px;background:linear-gradient(90deg,rgba(0,0,0,0),#22242c 85%)"></div>
<svg style="left:822.3px;top:1003px" width="16" height="16" viewBox="0 0 16 16"><rect width="16" height="16" fill="#04101c"/><path d="M3.5 2.2 H12.5 V9 Q12.5 12 8 14 Q3.5 12 3.5 9 Z" fill="#19c8e8"/><path d="M8 4 V9.5 M5.6 7.6 L8 10 L10.4 7.6" stroke="#04101c" stroke-width="1.5" fill="none"/></svg>
<div class="b" style="left:848.5px;top:1006.5px;width:2.6px;height:9px;background:#d6d6da"></div>
<div class="b" style="left:853.2px;top:1006.5px;width:2.6px;height:9px;background:#d6d6da"></div>
<span class="t" style="left:861.00px;top:1000.03px;font-size:13px;color:#e6e6ea;font-weight:normal;transform:scaleX(1.0164);transform-origin:0 50%;">Ссылки на модификац</span>
<div class="b" style="left:984px;top:999px;width:18px;height:24px;background:linear-gradient(90deg,rgba(0,0,0,0),#22242c 85%)"></div>
<svg style="left:1022.3px;top:1003px" width="16" height="16" viewBox="0 0 16 16"><rect width="16" height="16" fill="#04101c"/><path d="M3.5 2.2 H12.5 V9 Q12.5 12 8 14 Q3.5 12 3.5 9 Z" fill="#19c8e8"/><path d="M8 4 V9.5 M5.6 7.6 L8 10 L10.4 7.6" stroke="#04101c" stroke-width="1.5" fill="none"/></svg>
<span class="t" style="left:1047.00px;top:1000.03px;font-size:13px;color:#e6e6ea;font-weight:normal;transform:scaleX(1.0415);transform-origin:0 50%;">[FAQ] Пакеты модифика</span>
<div class="b" style="left:1184px;top:999px;width:18px;height:24px;background:linear-gradient(90deg,rgba(0,0,0,0),#22242c 85%)"></div>
<svg style="left:1222.3px;top:1003px" width="16" height="16" viewBox="0 0 16 16"><rect width="16" height="16" fill="#04101c"/><path d="M3.5 2.2 H12.5 V9 Q12.5 12 8 14 Q3.5 12 3.5 9 Z" fill="#19c8e8"/><path d="M8 4 V9.5 M5.6 7.6 L8 10 L10.4 7.6" stroke="#04101c" stroke-width="1.5" fill="none"/></svg>
<span class="t" style="left:1247.00px;top:1000.03px;font-size:13px;color:#e6e6ea;font-weight:normal;transform:scaleX(0.9584);transform-origin:0 50%;">MKMOD - Официальный с</span>
<div class="b" style="left:1384px;top:999px;width:18px;height:24px;background:linear-gradient(90deg,rgba(0,0,0,0),#22242c 85%)"></div>
<svg style="left:589px;top:1006px" width="10" height="10" viewBox="0 0 10 10"><path d="M.6 .6 L9.4 9.4 M9.4 .6 L.6 9.4" stroke="#fff" stroke-width="1.3"/></svg>
<div class="b" style="left:810px;top:1001px;width:1px;height:20px;background:#4a4c56"></div>
<div class="b" style="left:1010.5px;top:1001px;width:1px;height:20px;background:#4a4c56"></div>
<div class="b" style="left:1210.5px;top:1001px;width:1px;height:20px;background:#4a4c56"></div>
<div class="b" style="left:1410.5px;top:1001px;width:1px;height:20px;background:#4a4c56"></div>
<div class="b" style="left:1417.5px;top:999.5px;width:22px;height:22px;background:#3a3c46;border-radius:11px"></div>
<svg style="left:1423px;top:1005px" width="11" height="11" viewBox="0 0 11 11"><path d="M5.5 0 V11 M0 5.5 H11" stroke="#fff" stroke-width="1.3"/></svg>
<div class="b" style="left:1822px;top:2px;width:94.5px;height:145px;background:rgba(44,60,80,.87);border:1px solid rgba(75,95,120,.6)"></div>
<span class="t" style="left:1827.24px;top:2.20px;font-size:11.3px;color:#d3d9e2;font-weight:normal;">22 %</span>
<span class="t" style="left:1881.93px;top:2.20px;font-size:11.3px;color:#d3d9e2;font-weight:normal;">36 C</span>
<span class="t" style="left:1833.53px;top:22.20px;font-size:11.3px;color:#d3d9e2;font-weight:normal;">7 %</span>
<span class="t" style="left:1881.93px;top:22.20px;font-size:11.3px;color:#d3d9e2;font-weight:normal;">16 C</span>
<span class="t" style="left:1833.53px;top:42.20px;font-size:11.3px;color:#d3d9e2;font-weight:normal;">0 %</span>
<span class="t" style="left:1881.93px;top:42.20px;font-size:11.3px;color:#d3d9e2;font-weight:normal;">35 C</span>
<span class="t" style="left:1833.53px;top:62.20px;font-size:11.3px;color:#d3d9e2;font-weight:normal;">4 %</span>
<span class="t" style="left:1881.93px;top:62.20px;font-size:11.3px;color:#d3d9e2;font-weight:normal;">37 C</span>
<span class="t" style="left:1833.53px;top:82.20px;font-size:11.3px;color:#d3d9e2;font-weight:normal;">0 %</span>
<span class="t" style="left:1881.93px;top:82.20px;font-size:11.3px;color:#d3d9e2;font-weight:normal;">36 C</span>
<span class="t" style="left:1833.53px;top:102.20px;font-size:11.3px;color:#d3d9e2;font-weight:normal;">0 %</span>
<span class="t" style="left:1881.93px;top:102.20px;font-size:11.3px;color:#d3d9e2;font-weight:normal;">34 C</span>
<span class="t" style="left:1833.53px;top:122.20px;font-size:11.3px;color:#d3d9e2;font-weight:normal;">0 %</span>
<span class="t" style="left:1881.93px;top:122.20px;font-size:11.3px;color:#d3d9e2;font-weight:normal;">32 C</span>
<div class="b" style="left:1822px;top:875px;width:90.5px;height:119.5px;background:rgba(46,130,230,.93);border:1px solid rgba(90,160,240,.8)"></div>
<svg style="left:1854px;top:885px" width="52" height="13.500" viewBox="0 0 54 14"><g stroke="#d6e6fa" stroke-width="1.6" fill="none"><path d="M0 2.5 H14 M0 6.5 H14 M0 10.5 H14"/><path d="M38 2 L48 12 M48 2 L38 12" stroke-width="2"/></g><path d="M20 2 H32 L26 11 Z" fill="#d6e6fa"/></svg>
<span class="t" style="left:1885.00px;top:928.61px;font-size:17px;color:#ffee20;font-weight:bold;transform:scaleX(1.0599);transform-origin:0 50%;">53</span>
<svg style="left:1852px;top:932.500px" width="18" height="14" viewBox="0 0 18 14"><g fill="#dce860"><rect x="0" y="11" width="2" height="2"/><rect x="3" y="9" width="11" height="4"/><rect x="13" y="1" width="1.6" height="12"/><rect x="15.4" y="1" width="1.6" height="2"/><rect x="15.4" y="5" width="1.6" height="2"/></g></svg>
</body></html>
